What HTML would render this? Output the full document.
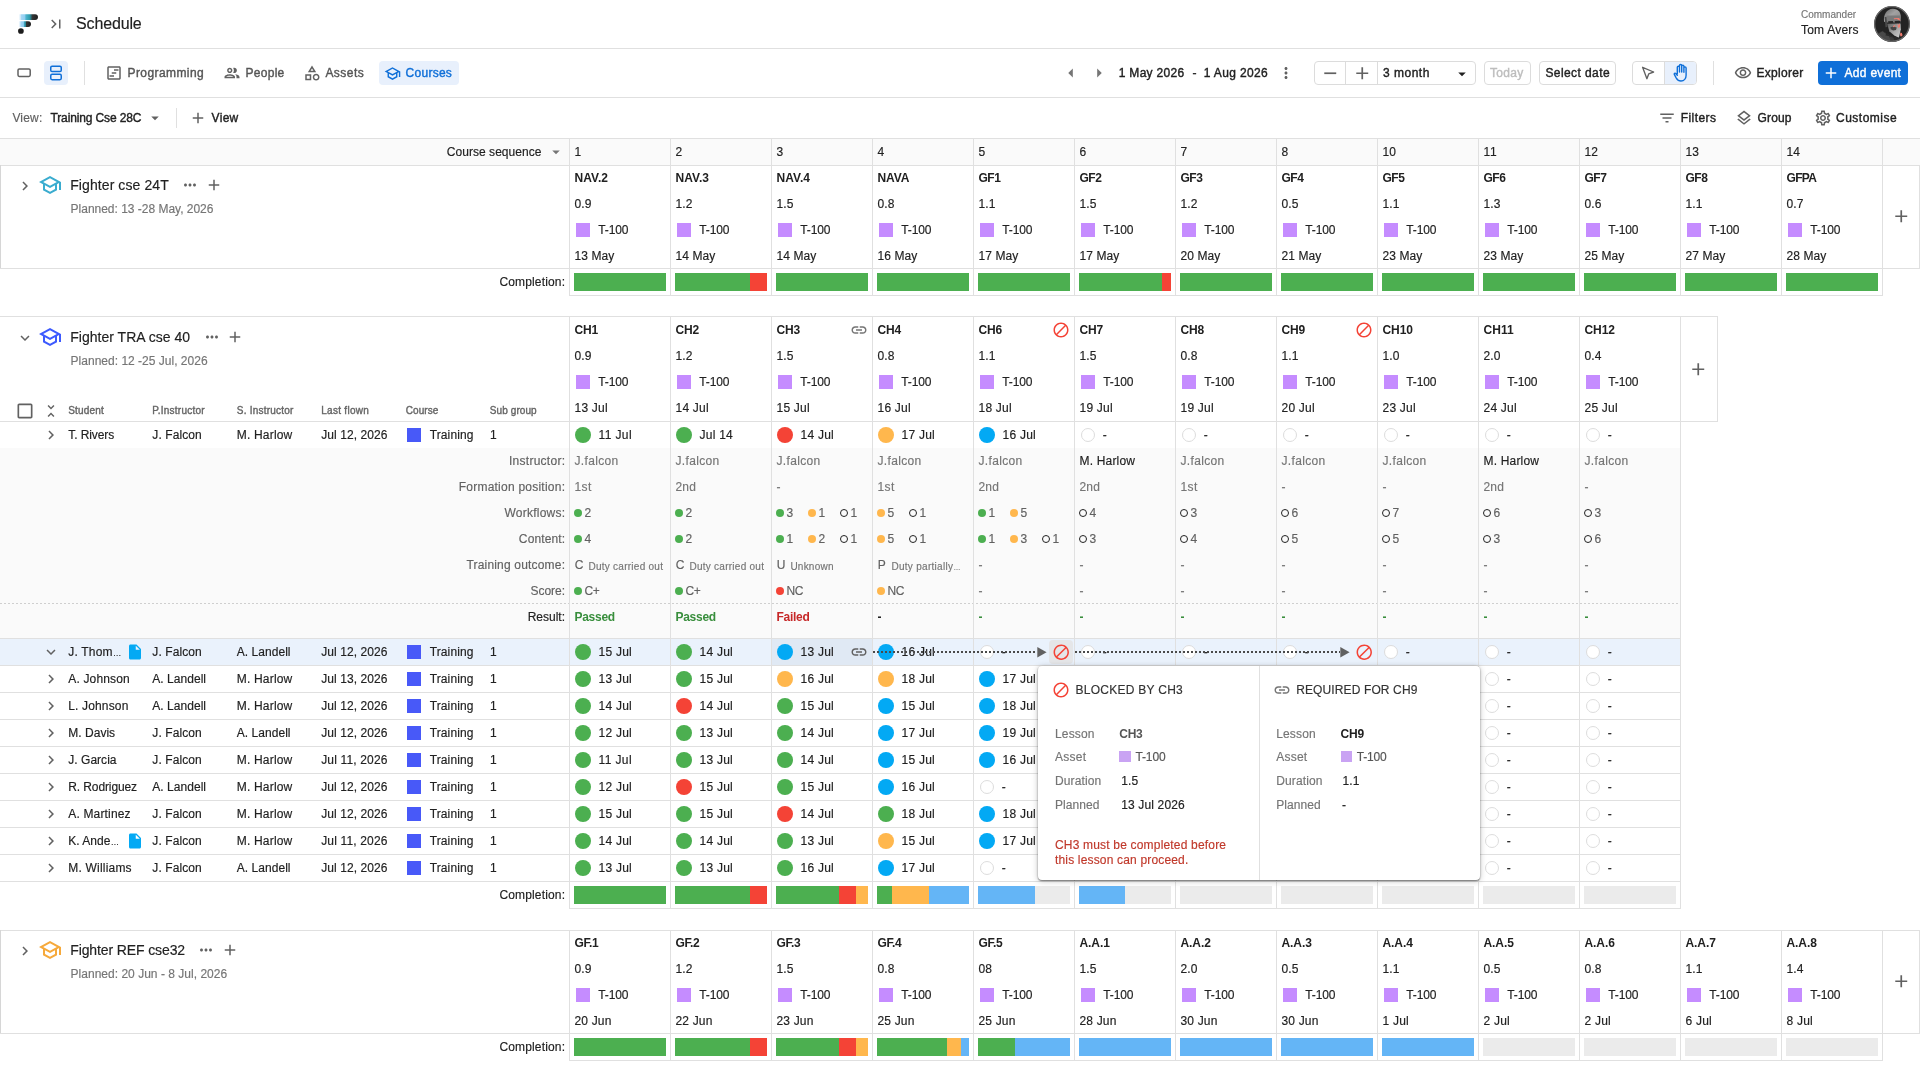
<!DOCTYPE html>
<html lang="en"><head><meta charset="utf-8"><title>Schedule</title>
<style>
html,body{margin:0;padding:0;}
body{width:1920px;height:1080px;overflow:hidden;background:#fff;position:relative;
font-family:"Liberation Sans",sans-serif;-webkit-font-smoothing:antialiased;}
#root{position:absolute;left:0;top:0;width:1920px;height:1080px;will-change:transform;}
.t{position:absolute;white-space:nowrap;margin:0;}
.b{position:absolute;}
.i{position:absolute;display:block;overflow:visible;}
</style></head>
<body>
<div id="root">
<div class="b " style="left:0px;top:48px;width:1920px;height:1px;background:#e0e0e0;"></div>
<svg class="i" style="left:17px;top:13px;" width="23" height="22" viewBox="17 13 23 22"><defs><linearGradient id="lg1" x1="0" x2="1" y1="0" y2="0"><stop offset="0" stop-color="#d6ecfb" stop-opacity="0"/><stop offset="0.100" stop-color="#c2e2f8" stop-opacity="0.800"/><stop offset="0.150" stop-color="#a3d6f4"/><stop offset="0.330" stop-color="#8fcdf0"/><stop offset="0.370" stop-color="#4fb6d0"/><stop offset="0.580" stop-color="#2d9aa9"/><stop offset="0.660" stop-color="#2c5a62"/><stop offset="0.720" stop-color="#333"/><stop offset="1" stop-color="#1e1e1e"/></linearGradient><linearGradient id="lg2" x1="0" x2="1" y1="0" y2="0"><stop offset="0" stop-color="#d6ecfb" stop-opacity="0"/><stop offset="0.140" stop-color="#c2e2f8" stop-opacity="0.800"/><stop offset="0.200" stop-color="#a3d6f4"/><stop offset="0.400" stop-color="#8fcdf0"/><stop offset="0.440" stop-color="#45aec8"/><stop offset="0.560" stop-color="#2b8d9c"/><stop offset="0.620" stop-color="#333"/><stop offset="1" stop-color="#1e1e1e"/></linearGradient></defs><path d="M18.600 14.200H35.100a2.900 2.900 0 0 1 0 5.800H18.600z" fill="url(#lg1)"/><path d="M18.400 21.200H28.100a2.900 2.900 0 0 1 0 5.800H18.400z" fill="url(#lg2)"/><circle cx="20.900" cy="31" r="2.850" fill="#1c1c1c"/></svg>
<svg class="i" style="left:46.6px;top:15.1px;" width="18" height="18" viewBox="0 0 24 24"><path fill="#616161" d="M5.59 7.41L10.18 12l-4.59 4.59L7 18l6-6-6-6zM16 6h2v12h-2z"/></svg>
<div class="t " style="left:76px;top:12px;font-size:16px;line-height:24px;color:#212121;letter-spacing:-0.146px;-webkit-text-stroke:0.160px;">Schedule</div>
<div class="t " style="left:1801px;top:7.4px;font-size:10px;line-height:16px;color:#757575;letter-spacing:0.003px;-webkit-text-stroke:0.160px;">Commander</div>
<div class="t " style="left:1801px;top:20px;font-size:12px;line-height:20px;color:#212121;letter-spacing:0.213px;-webkit-text-stroke:0.160px;">Tom Avers</div>
<svg class="i" style="left:1874px;top:6px;" width="36" height="36" viewBox="0 0 36 36"><defs><clipPath id="av"><circle cx="18" cy="18" r="17.800"/></clipPath><filter id="bl" x="-10%" y="-10%" width="120%" height="120%"><feGaussianBlur stdDeviation="0.550"/></filter><filter id="bl2" x="-10%" y="-10%" width="120%" height="120%"><feGaussianBlur stdDeviation="0.300"/></filter><linearGradient id="hr" x1="0" x2="1" y1="0" y2="1"><stop offset="0" stop-color="#666"/><stop offset="0.45" stop-color="#a2a2a2"/><stop offset="1" stop-color="#858585"/></linearGradient><linearGradient id="bd" x1="0" x2="1" y1="0" y2="1"><stop offset="0" stop-color="#5e5e5e"/><stop offset="0.55" stop-color="#a8a8a8"/><stop offset="1" stop-color="#cfcfcf"/></linearGradient></defs><g clip-path="url(#av)"><rect width="36" height="36" fill="#232323"/><g filter="url(#bl)"><path d="M10 15.500C9.300 8.500 12.500 3.200 18.800 2.800 24.300 2.800 27 6.500 26.800 11.500L26.600 15 10.700 16z" fill="url(#hr)"/><path d="M12.500 9.500h14v7h-14z" fill="#7a7a7a"/><path d="M10.600 11l1.900-.3.900 10.300-1.900.2z" fill="#4a4a4a"/><path d="M14 15.200l4.800-.2.600 2.300-4.600.6z M20.600 15l5.600-.2.100 2.700-4.900.3z" fill="#262626"/><path d="M13.200 17.800l13.400-.3.300 5.800-2.100 8.500-4.500-2.400-5-4.200z" fill="url(#bd)"/><path d="M16.400 21.200l3-.7 3.300 1-.7 2.500-2.900.5-2.300-1.300z" fill="#444"/><path d="M0 28.500l8.500-4 5.500 3.600 6 3 6.500 1 8-4.600V37H0z" fill="#2b2b2b"/><path d="M4.500 27.500l4.200-2.300 3.400 2.800-.8 1.500 3.300.4 2.500 3.200-2.500 3H7.500z" fill="#4a4a4a"/><path d="M15 30.500l4.500 1.200.8 3.200-3.200.6z" fill="#3b3b3b"/></g><path filter="url(#bl2)" d="M19.800 12.200l5.300-.2 1.400 2.700-1.800-.8-1.900-.8-2.800.1z M19 19.900l2.200-1-.5 1.700-1.500.7z M23.200 17.500l1.100 1.800 1.600-2.100.1 3.500-1.300 1.500-.9-1.800z M26.400 26.400l1.400.6.800 2.300-1.700 1.500-.9-1.800z" fill="#f27c6f"/></g><circle cx="18" cy="18" r="17.350" fill="none" stroke="#666" stroke-width="1.300"/></svg>
<div class="b " style="left:0px;top:97px;width:1920px;height:1px;background:#e0e0e0;"></div>
<svg class="i" style="left:16px;top:66px;" width="16" height="14" viewBox="0 0 16 14"><rect x="2" y="3" width="12.200" height="7.400" rx="1.300" fill="none" stroke="#616161" stroke-width="1.500"/></svg>
<div class="b " style="left:44px;top:61px;width:24px;height:24px;background:#e8f0fc;border-radius:4px;"></div>
<svg class="i" style="left:48px;top:63px;" width="16" height="20" viewBox="0 0 16 20"><rect x="2.750" y="3.150" width="10.500" height="5.300" rx="1.300" fill="none" stroke="#0f6fd8" stroke-width="1.500"/><rect x="2.750" y="11.350" width="10.500" height="5.300" rx="1.300" fill="none" stroke="#0f6fd8" stroke-width="1.500"/></svg>
<div class="b " style="left:84px;top:61px;width:1px;height:24px;background:#e0e0e0;"></div>
<svg class="i" style="left:105px;top:64px;" width="18" height="18" viewBox="0 0 24 24"><path fill="#616161" d="M6 15h6v2H6zm6-8h6v2h-6zm-3 4h6v2H9zM19 3H5c-1.1 0-2 .9-2 2v14c0 1.1.9 2 2 2h14c1.1 0 2-.9 2-2V5c0-1.1-.9-2-2-2zm0 16H5V5h14v14z"/></svg>
<div class="t " style="left:127.5px;top:61px;font-size:12px;line-height:24px;color:#555;letter-spacing:0.416px;-webkit-text-stroke:0.380px;">Programming</div>
<svg class="i" style="left:223px;top:64px;" width="18" height="18" viewBox="0 0 24 24"><path fill="#616161" d="M9 13.75c-2.34 0-7 1.17-7 3.5V19h14v-1.75c0-2.33-4.66-3.5-7-3.5zM4.34 17c.84-.58 2.87-1.25 4.66-1.25s3.82.67 4.66 1.25H4.34zM9 12c1.93 0 3.5-1.57 3.5-3.5S10.93 5 9 5 5.5 6.57 5.5 8.5 7.07 12 9 12zm0-5c.83 0 1.5.67 1.5 1.5S9.83 10 9 10s-1.5-.67-1.5-1.5S8.17 7 9 7zm7.04 6.81c1.16.84 1.96 1.96 1.96 3.44V19h4v-1.75c0-2.02-3.5-3.17-5.96-3.44zM15 12c1.93 0 3.5-1.57 3.5-3.5S16.93 5 15 5c-.54 0-1.04.13-1.5.35.63.89 1 1.98 1 3.15s-.37 2.26-1 3.15c.46.22.96.35 1.5.35z"/></svg>
<div class="t " style="left:245.6px;top:61px;font-size:12px;line-height:24px;color:#555;letter-spacing:0.262px;-webkit-text-stroke:0.380px;">People</div>
<svg class="i" style="left:303px;top:63.5px;" width="18" height="18" viewBox="0 0 24 24"><path fill="#616161" d="M12 2l-5.5 9h11L12 2zm0 3.84L13.93 9h-3.87L12 5.84zM17.5 13c-2.49 0-4.5 2.01-4.5 4.5s2.01 4.5 4.5 4.5 4.5-2.01 4.5-4.5-2.01-4.5-4.5-4.5zm0 7c-1.38 0-2.5-1.12-2.5-2.5s1.12-2.5 2.5-2.5 2.5 1.12 2.5 2.5-1.12 2.5-2.5 2.5zM3 21.5h8v-8H3v8zm2-6h4v4H5v-4z"/></svg>
<div class="t " style="left:325.4px;top:61px;font-size:12px;line-height:24px;color:#555;letter-spacing:0.468px;-webkit-text-stroke:0.380px;">Assets</div>
<div class="b " style="left:379px;top:61px;width:80px;height:24px;background:#e8f0fc;border-radius:4px;"></div>
<svg class="i" style="left:384px;top:64.5px;" width="17" height="17" viewBox="0 0 24 24"><path fill="#0f6fd8" d="M12 3L1 9l4 2.18v6L12 21l7-3.82v-6l2-1.09V17h2V9L12 3zm6.82 6L12 12.72 5.18 9 12 5.28 18.82 9zM17 15.99l-5 2.73-5-2.73v-3.72L12 15l5-2.73v3.72z"/></svg>
<div class="t " style="left:405.6px;top:61px;font-size:12px;line-height:24px;color:#0f6fd8;letter-spacing:0.258px;-webkit-text-stroke:0.380px;">Courses</div>
<svg class="i" style="left:1060px;top:62px;" width="22" height="22" viewBox="0 0 24 24"><path fill="#757575" d="M14 7l-5 5 5 5V7z"/></svg>
<svg class="i" style="left:1087.5px;top:62px;" width="22" height="22" viewBox="0 0 24 24"><path fill="#757575" d="M10 17l5-5-5-5v10z"/></svg>
<div class="t " style="left:1118.7px;top:61px;font-size:12px;line-height:24px;color:#212121;letter-spacing:0.313px;-webkit-text-stroke:0.380px;">1 May 2026</div>
<div class="t " style="left:1192.5px;top:61px;font-size:12px;line-height:24px;color:#212121;letter-spacing:-0.053px;-webkit-text-stroke:0.380px;">-</div>
<div class="t " style="left:1203.7px;top:61px;font-size:12px;line-height:24px;color:#212121;letter-spacing:0.374px;-webkit-text-stroke:0.380px;">1 Aug 2026</div>
<svg class="i" style="left:1277px;top:64px;" width="18" height="18" viewBox="0 0 24 24"><path fill="#616161" d="M12 8c1.1 0 2-.9 2-2s-.9-2-2-2-2 .9-2 2 .9 2 2 2zm0 2c-1.1 0-2 .9-2 2s.9 2 2 2 2-.9 2-2-.9-2-2-2zm0 6c-1.1 0-2 .9-2 2s.9 2 2 2 2-.9 2-2-.9-2-2-2z"/></svg>
<div class="b " style="left:1314px;top:61px;width:162px;height:24px;background:#fff;border:1px solid #dcdcdc;border-radius:4px;box-sizing:border-box;"></div>
<div class="b " style="left:1345px;top:61px;width:1px;height:24px;background:#dcdcdc;"></div>
<div class="b " style="left:1377px;top:61px;width:1px;height:24px;background:#dcdcdc;"></div>
<svg class="i" style="left:1319.65px;top:62.75px;" width="20.5" height="20.5" viewBox="0 0 24 24"><path fill="#616161" d="M19 13H5v-2h14v2z"/></svg>
<svg class="i" style="left:1351.75px;top:62.85px;" width="20.5" height="20.5" viewBox="0 0 24 24"><path fill="#616161" d="M19 13h-6v6h-2v-6H5v-2h6V5h2v6h6v2z"/></svg>
<div class="t " style="left:1383px;top:61px;font-size:12px;line-height:24px;color:#212121;letter-spacing:0.502px;-webkit-text-stroke:0.380px;">3 month</div>
<svg class="i" style="left:1453px;top:64.5px;" width="18" height="18" viewBox="0 0 24 24"><path fill="#212121" d="M7 10l5 5 5-5z"/></svg>
<div class="b " style="left:1484px;top:61px;width:47px;height:24px;background:#fff;border:1px solid #dcdcdc;border-radius:4px;box-sizing:border-box;"></div>
<div class="t " style="left:1490px;top:61px;font-size:12px;line-height:24px;color:#bdbdbd;letter-spacing:0.282px;-webkit-text-stroke:0.380px;">Today</div>
<div class="b " style="left:1539px;top:61px;width:77px;height:24px;background:#fff;border:1px solid #dcdcdc;border-radius:4px;box-sizing:border-box;"></div>
<div class="t " style="left:1545.4px;top:61px;font-size:12px;line-height:24px;color:#212121;letter-spacing:0.413px;-webkit-text-stroke:0.380px;">Select date</div>
<div class="b " style="left:1632px;top:61px;width:65px;height:24px;background:#fff;border:1px solid #dcdcdc;border-radius:4px;box-sizing:border-box;overflow:hidden;"></div>
<div class="b " style="left:1665px;top:62px;width:31px;height:22px;background:#e8f0fc;border-radius:0 3px 3px 0;"></div>
<div class="b " style="left:1664px;top:61px;width:1px;height:24px;background:#dcdcdc;"></div>
<svg class="i" style="left:1640px;top:65px;" width="16" height="16" viewBox="0 0 16 16"><path d="M2.600 2.300L13.600 7 8.700 8.900 6.900 13.700z" fill="none" stroke="#616161" stroke-width="1.350" stroke-linejoin="round"/></svg>
<svg class="i" style="left:1672px;top:63px;" width="18" height="20" viewBox="0 0 18 20"><path d="M5.300 10.800V4.300a1.100 1.100 0 0 1 2.200 0V9 M7.500 9V2.600a1.100 1.100 0 0 1 2.200 0V9 M9.700 9V3.200a1.100 1.100 0 0 1 2.200 0V9.200 M11.900 9.200V5a1.100 1.100 0 0 1 2.200 0v7.300c0 3.300-2 5.700-5.100 5.700-2.300 0-3.600-1-4.700-2.900L2.300 11.400c-.5-.9.700-1.700 1.500-.9l1.500 1.700" fill="none" stroke="#0f6fd8" stroke-width="1.400" stroke-linecap="round" stroke-linejoin="round"/></svg>
<div class="b " style="left:1713px;top:61px;width:1px;height:24px;background:#e0e0e0;"></div>
<svg class="i" style="left:1734px;top:64.1px;" width="18" height="18" viewBox="0 0 24 24"><path fill="#616161" d="M12 6c3.79 0 7.17 2.13 8.82 5.5C19.17 14.87 15.79 17 12 17s-7.17-2.13-8.82-5.5C4.83 8.13 8.21 6 12 6m0-2C7 4 2.73 7.11 1 11.5 2.73 15.89 7 19 12 19s9.27-3.11 11-7.5C21.27 7.11 17 4 12 4zm0 5c1.38 0 2.5 1.12 2.5 2.5S13.38 14 12 14s-2.5-1.12-2.5-2.5S10.62 9 12 9m0-2c-2.48 0-4.5 2.02-4.5 4.5S9.52 16 12 16s4.5-2.02 4.5-4.5S14.48 7 12 7z"/></svg>
<div class="t " style="left:1756.5px;top:61px;font-size:12px;line-height:24px;color:#212121;letter-spacing:0.296px;-webkit-text-stroke:0.380px;">Explorer</div>
<div class="b " style="left:1818px;top:61px;width:90px;height:24px;background:#0f6fd8;border-radius:4px;"></div>
<svg class="i" style="left:1821.5px;top:64px;" width="18" height="18" viewBox="0 0 24 24"><path fill="#fff" d="M19 13h-6v6h-2v-6H5v-2h6V5h2v6h6v2z"/></svg>
<div class="t " style="left:1844.5px;top:61px;font-size:12px;line-height:24px;color:#fff;letter-spacing:0.301px;-webkit-text-stroke:0.380px;">Add event</div>
<div class="b " style="left:0px;top:138px;width:1920px;height:1px;background:#e0e0e0;"></div>
<div class="t " style="left:12.4px;top:106px;font-size:12px;line-height:24px;color:#616161;letter-spacing:0.194px;-webkit-text-stroke:0.160px;">View:</div>
<div class="t " style="left:50.5px;top:106px;font-size:12px;line-height:24px;color:#212121;letter-spacing:-0.129px;-webkit-text-stroke:0.380px;">Training Cse 28C</div>
<svg class="i" style="left:145.6px;top:109.3px;" width="18" height="18" viewBox="0 0 24 24"><path fill="#616161" d="M7 10l5 5 5-5z"/></svg>
<div class="b " style="left:176px;top:108px;width:1px;height:20px;background:#e0e0e0;"></div>
<svg class="i" style="left:188.8px;top:109px;" width="18" height="18" viewBox="0 0 24 24"><path fill="#616161" d="M19 13h-6v6h-2v-6H5v-2h6V5h2v6h6v2z"/></svg>
<div class="t " style="left:211.6px;top:106px;font-size:12px;line-height:24px;color:#212121;letter-spacing:0.301px;-webkit-text-stroke:0.380px;">View</div>
<svg class="i" style="left:1658px;top:109px;" width="18" height="18" viewBox="0 0 24 24"><path fill="#616161" d="M10 18h4v-2h-4v2zM3 6v2h18V6H3zm3 7h12v-2H6v2z"/></svg>
<div class="t " style="left:1680.7px;top:106px;font-size:12px;line-height:24px;color:#212121;letter-spacing:0.432px;-webkit-text-stroke:0.380px;">Filters</div>
<svg class="i" style="left:1735px;top:109px;" width="18" height="18" viewBox="0 0 24 24"><path fill="#616161" d="M11.99 18.54l-7.37-5.73L3 14.07l9 7 9-7-1.63-1.27-7.38 5.74zM12 16l7.36-5.73L21 9l-9-7-9 7 1.63 1.27L12 16zm0-11.47L17.74 9 12 13.47 6.26 9 12 4.53z"/></svg>
<div class="t " style="left:1757.6px;top:106px;font-size:12px;line-height:24px;color:#212121;letter-spacing:0.117px;-webkit-text-stroke:0.380px;">Group</div>
<svg class="i" style="left:1814px;top:109px;" width="18" height="18" viewBox="0 0 24 24"><path fill="#616161" d="M19.43 12.98c.04-.32.07-.64.07-.98 0-.34-.03-.66-.07-.98l2.11-1.65c.19-.15.24-.42.12-.64l-2-3.46c-.09-.16-.26-.25-.44-.25-.06 0-.12.01-.17.03l-2.49 1c-.52-.4-1.08-.73-1.69-.98l-.38-2.65C14.46 2.18 14.25 2 14 2h-4c-.25 0-.46.18-.49.42l-.38 2.65c-.61.25-1.17.59-1.69.98l-2.49-1c-.06-.02-.12-.03-.18-.03-.17 0-.34.09-.43.25l-2 3.46c-.13.22-.07.49.12.64l2.11 1.65c-.04.32-.07.65-.07.98 0 .33.03.66.07.98l-2.11 1.65c-.19.15-.24.42-.12.64l2 3.46c.09.16.26.25.44.25.06 0 .12-.01.17-.03l2.49-1c.52.4 1.08.73 1.69.98l.38 2.65c.03.24.24.42.49.42h4c.25 0 .46-.18.49-.42l.38-2.65c.61-.25 1.17-.59 1.69-.98l2.49 1c.06.02.12.03.18.03.17 0 .34-.09.43-.25l2-3.46c.12-.22.07-.49-.12-.64l-2.11-1.65zm-1.98-1.71c.04.31.05.52.05.73 0 .21-.02.43-.05.73l-.14 1.13.89.7 1.08.84-.7 1.21-1.27-.51-1.04-.42-.9.68c-.43.32-.84.56-1.25.73l-1.06.43-.16 1.13-.2 1.35h-1.4l-.19-1.35-.16-1.13-1.06-.43c-.43-.18-.83-.41-1.23-.71l-.91-.7-1.06.43-1.27.51-.7-1.21 1.08-.84.89-.7-.14-1.13c-.03-.31-.05-.54-.05-.74s.02-.43.05-.73l.14-1.13-.89-.7-1.08-.84.7-1.21 1.27.51 1.04.42.9-.68c.43-.32.84-.56 1.25-.73l1.06-.43.16-1.13.2-1.35h1.39l.19 1.35.16 1.13 1.06.43c.43.18.83.41 1.23.71l.91.7 1.06-.43 1.27-.51.7 1.21-1.07.85-.89.7.14 1.13zM12 8c-2.21 0-4 1.79-4 4s1.79 4 4 4 4-1.79 4-4-1.79-4-4-4zm0 6c-1.1 0-2-.9-2-2s.9-2 2-2 2 .9 2 2-.9 2-2 2z"/></svg>
<div class="t " style="left:1836px;top:106px;font-size:12px;line-height:24px;color:#212121;letter-spacing:0.492px;-webkit-text-stroke:0.380px;">Customise</div>
<div class="b " style="left:0px;top:139px;width:1920px;height:26px;background:#fafafa;"></div>
<div class="b " style="left:0px;top:165px;width:1920px;height:1px;background:#e0e0e0;"></div>
<div class="t " style="left:-58.5px;width:600px;text-align:right;top:139px;font-size:12px;line-height:26px;color:#212121;letter-spacing:0.046px;-webkit-text-stroke:0.160px;margin-left:0.046px;">Course sequence</div>
<svg class="i" style="left:546.8px;top:143.2px;" width="18" height="18" viewBox="0 0 24 24"><path fill="#757575" d="M7 10l5 5 5-5z"/></svg>
<div class="b " style="left:569px;top:139px;width:1px;height:26px;background:#e0e0e0;"></div>
<div class="t " style="left:574.5px;top:139px;font-size:12px;line-height:26px;color:#212121;letter-spacing:0.190px;-webkit-text-stroke:0.160px;">1</div>
<div class="b " style="left:670px;top:139px;width:1px;height:26px;background:#e0e0e0;"></div>
<div class="t " style="left:675.5px;top:139px;font-size:12px;line-height:26px;color:#212121;letter-spacing:0.190px;-webkit-text-stroke:0.160px;">2</div>
<div class="b " style="left:771px;top:139px;width:1px;height:26px;background:#e0e0e0;"></div>
<div class="t " style="left:776.5px;top:139px;font-size:12px;line-height:26px;color:#212121;letter-spacing:0.190px;-webkit-text-stroke:0.160px;">3</div>
<div class="b " style="left:872px;top:139px;width:1px;height:26px;background:#e0e0e0;"></div>
<div class="t " style="left:877.5px;top:139px;font-size:12px;line-height:26px;color:#212121;letter-spacing:0.190px;-webkit-text-stroke:0.160px;">4</div>
<div class="b " style="left:973px;top:139px;width:1px;height:26px;background:#e0e0e0;"></div>
<div class="t " style="left:978.5px;top:139px;font-size:12px;line-height:26px;color:#212121;letter-spacing:0.190px;-webkit-text-stroke:0.160px;">5</div>
<div class="b " style="left:1074px;top:139px;width:1px;height:26px;background:#e0e0e0;"></div>
<div class="t " style="left:1079.5px;top:139px;font-size:12px;line-height:26px;color:#212121;letter-spacing:0.190px;-webkit-text-stroke:0.160px;">6</div>
<div class="b " style="left:1175px;top:139px;width:1px;height:26px;background:#e0e0e0;"></div>
<div class="t " style="left:1180.5px;top:139px;font-size:12px;line-height:26px;color:#212121;letter-spacing:0.190px;-webkit-text-stroke:0.160px;">7</div>
<div class="b " style="left:1276px;top:139px;width:1px;height:26px;background:#e0e0e0;"></div>
<div class="t " style="left:1281.5px;top:139px;font-size:12px;line-height:26px;color:#212121;letter-spacing:0.190px;-webkit-text-stroke:0.160px;">8</div>
<div class="b " style="left:1377px;top:139px;width:1px;height:26px;background:#e0e0e0;"></div>
<div class="t " style="left:1382.5px;top:139px;font-size:12px;line-height:26px;color:#212121;letter-spacing:0.190px;-webkit-text-stroke:0.160px;">10</div>
<div class="b " style="left:1478px;top:139px;width:1px;height:26px;background:#e0e0e0;"></div>
<div class="t " style="left:1483.5px;top:139px;font-size:12px;line-height:26px;color:#212121;letter-spacing:0.636px;-webkit-text-stroke:0.160px;">11</div>
<div class="b " style="left:1579px;top:139px;width:1px;height:26px;background:#e0e0e0;"></div>
<div class="t " style="left:1584.5px;top:139px;font-size:12px;line-height:26px;color:#212121;letter-spacing:0.190px;-webkit-text-stroke:0.160px;">12</div>
<div class="b " style="left:1680px;top:139px;width:1px;height:26px;background:#e0e0e0;"></div>
<div class="t " style="left:1685.5px;top:139px;font-size:12px;line-height:26px;color:#212121;letter-spacing:0.190px;-webkit-text-stroke:0.160px;">13</div>
<div class="b " style="left:1781px;top:139px;width:1px;height:26px;background:#e0e0e0;"></div>
<div class="t " style="left:1786.5px;top:139px;font-size:12px;line-height:26px;color:#212121;letter-spacing:0.190px;-webkit-text-stroke:0.160px;">14</div>
<div class="b " style="left:1882px;top:139px;width:1px;height:26px;background:#e0e0e0;"></div>
<div class="b " style="left:0px;top:165px;width:1px;height:104px;background:#d6d6d6;"></div>
<div class="b " style="left:569px;top:165px;width:1px;height:104px;background:#e0e0e0;"></div>
<div class="b " style="left:670px;top:165px;width:1px;height:104px;background:#e0e0e0;"></div>
<div class="b " style="left:771px;top:165px;width:1px;height:104px;background:#e0e0e0;"></div>
<div class="b " style="left:872px;top:165px;width:1px;height:104px;background:#e0e0e0;"></div>
<div class="b " style="left:973px;top:165px;width:1px;height:104px;background:#e0e0e0;"></div>
<div class="b " style="left:1074px;top:165px;width:1px;height:104px;background:#e0e0e0;"></div>
<div class="b " style="left:1175px;top:165px;width:1px;height:104px;background:#e0e0e0;"></div>
<div class="b " style="left:1276px;top:165px;width:1px;height:104px;background:#e0e0e0;"></div>
<div class="b " style="left:1377px;top:165px;width:1px;height:104px;background:#e0e0e0;"></div>
<div class="b " style="left:1478px;top:165px;width:1px;height:104px;background:#e0e0e0;"></div>
<div class="b " style="left:1579px;top:165px;width:1px;height:104px;background:#e0e0e0;"></div>
<div class="b " style="left:1680px;top:165px;width:1px;height:104px;background:#e0e0e0;"></div>
<div class="b " style="left:1781px;top:165px;width:1px;height:104px;background:#e0e0e0;"></div>
<div class="b " style="left:1882px;top:165px;width:1px;height:104px;background:#e0e0e0;"></div>
<div class="b " style="left:0px;top:268px;width:1920px;height:1px;background:#e0e0e0;"></div>
<div class="b " style="left:1919px;top:165px;width:1px;height:104px;background:#e0e0e0;"></div>
<div class="t " style="left:574.5px;top:165px;font-size:12px;line-height:26px;color:#212121;letter-spacing:0.015px;font-weight:bold;">NAV.2</div>
<div class="t " style="left:574.5px;top:191px;font-size:12px;line-height:26px;color:#212121;letter-spacing:0.110px;-webkit-text-stroke:0.160px;">0.9</div>
<div class="b " style="left:576px;top:223px;width:14px;height:14px;background:#c58cff;"></div>
<div class="t " style="left:598.3px;top:217px;font-size:12px;line-height:26px;color:#212121;letter-spacing:-0.147px;-webkit-text-stroke:0.160px;">T-100</div>
<div class="t " style="left:574.5px;top:243px;font-size:12px;line-height:26px;color:#212121;letter-spacing:0.071px;-webkit-text-stroke:0.160px;">13 May</div>
<div class="t " style="left:675.5px;top:165px;font-size:12px;line-height:26px;color:#212121;letter-spacing:0.015px;font-weight:bold;">NAV.3</div>
<div class="t " style="left:675.5px;top:191px;font-size:12px;line-height:26px;color:#212121;letter-spacing:0.110px;-webkit-text-stroke:0.160px;">1.2</div>
<div class="b " style="left:677px;top:223px;width:14px;height:14px;background:#c58cff;"></div>
<div class="t " style="left:699.3px;top:217px;font-size:12px;line-height:26px;color:#212121;letter-spacing:-0.147px;-webkit-text-stroke:0.160px;">T-100</div>
<div class="t " style="left:675.5px;top:243px;font-size:12px;line-height:26px;color:#212121;letter-spacing:0.071px;-webkit-text-stroke:0.160px;">14 May</div>
<div class="t " style="left:776.5px;top:165px;font-size:12px;line-height:26px;color:#212121;letter-spacing:0.015px;font-weight:bold;">NAV.4</div>
<div class="t " style="left:776.5px;top:191px;font-size:12px;line-height:26px;color:#212121;letter-spacing:0.110px;-webkit-text-stroke:0.160px;">1.5</div>
<div class="b " style="left:778px;top:223px;width:14px;height:14px;background:#c58cff;"></div>
<div class="t " style="left:800.3px;top:217px;font-size:12px;line-height:26px;color:#212121;letter-spacing:-0.147px;-webkit-text-stroke:0.160px;">T-100</div>
<div class="t " style="left:776.5px;top:243px;font-size:12px;line-height:26px;color:#212121;letter-spacing:0.071px;-webkit-text-stroke:0.160px;">14 May</div>
<div class="t " style="left:877.5px;top:165px;font-size:12px;line-height:26px;color:#212121;letter-spacing:-0.080px;font-weight:bold;">NAVA</div>
<div class="t " style="left:877.5px;top:191px;font-size:12px;line-height:26px;color:#212121;letter-spacing:0.110px;-webkit-text-stroke:0.160px;">0.8</div>
<div class="b " style="left:879px;top:223px;width:14px;height:14px;background:#c58cff;"></div>
<div class="t " style="left:901.3px;top:217px;font-size:12px;line-height:26px;color:#212121;letter-spacing:-0.147px;-webkit-text-stroke:0.160px;">T-100</div>
<div class="t " style="left:877.5px;top:243px;font-size:12px;line-height:26px;color:#212121;letter-spacing:0.071px;-webkit-text-stroke:0.160px;">16 May</div>
<div class="t " style="left:978.5px;top:165px;font-size:12px;line-height:26px;color:#212121;letter-spacing:-0.516px;font-weight:bold;">GF1</div>
<div class="t " style="left:978.5px;top:191px;font-size:12px;line-height:26px;color:#212121;letter-spacing:0.110px;-webkit-text-stroke:0.160px;">1.1</div>
<div class="b " style="left:980px;top:223px;width:14px;height:14px;background:#c58cff;"></div>
<div class="t " style="left:1002.3px;top:217px;font-size:12px;line-height:26px;color:#212121;letter-spacing:-0.147px;-webkit-text-stroke:0.160px;">T-100</div>
<div class="t " style="left:978.5px;top:243px;font-size:12px;line-height:26px;color:#212121;letter-spacing:0.071px;-webkit-text-stroke:0.160px;">17 May</div>
<div class="t " style="left:1079.5px;top:165px;font-size:12px;line-height:26px;color:#212121;letter-spacing:-0.516px;font-weight:bold;">GF2</div>
<div class="t " style="left:1079.5px;top:191px;font-size:12px;line-height:26px;color:#212121;letter-spacing:0.110px;-webkit-text-stroke:0.160px;">1.5</div>
<div class="b " style="left:1081px;top:223px;width:14px;height:14px;background:#c58cff;"></div>
<div class="t " style="left:1103.3px;top:217px;font-size:12px;line-height:26px;color:#212121;letter-spacing:-0.147px;-webkit-text-stroke:0.160px;">T-100</div>
<div class="t " style="left:1079.5px;top:243px;font-size:12px;line-height:26px;color:#212121;letter-spacing:0.071px;-webkit-text-stroke:0.160px;">17 May</div>
<div class="t " style="left:1180.5px;top:165px;font-size:12px;line-height:26px;color:#212121;letter-spacing:-0.516px;font-weight:bold;">GF3</div>
<div class="t " style="left:1180.5px;top:191px;font-size:12px;line-height:26px;color:#212121;letter-spacing:0.110px;-webkit-text-stroke:0.160px;">1.2</div>
<div class="b " style="left:1182px;top:223px;width:14px;height:14px;background:#c58cff;"></div>
<div class="t " style="left:1204.3px;top:217px;font-size:12px;line-height:26px;color:#212121;letter-spacing:-0.147px;-webkit-text-stroke:0.160px;">T-100</div>
<div class="t " style="left:1180.5px;top:243px;font-size:12px;line-height:26px;color:#212121;letter-spacing:0.071px;-webkit-text-stroke:0.160px;">20 May</div>
<div class="t " style="left:1281.5px;top:165px;font-size:12px;line-height:26px;color:#212121;letter-spacing:-0.516px;font-weight:bold;">GF4</div>
<div class="t " style="left:1281.5px;top:191px;font-size:12px;line-height:26px;color:#212121;letter-spacing:0.110px;-webkit-text-stroke:0.160px;">0.5</div>
<div class="b " style="left:1283px;top:223px;width:14px;height:14px;background:#c58cff;"></div>
<div class="t " style="left:1305.3px;top:217px;font-size:12px;line-height:26px;color:#212121;letter-spacing:-0.147px;-webkit-text-stroke:0.160px;">T-100</div>
<div class="t " style="left:1281.5px;top:243px;font-size:12px;line-height:26px;color:#212121;letter-spacing:0.071px;-webkit-text-stroke:0.160px;">21 May</div>
<div class="t " style="left:1382.5px;top:165px;font-size:12px;line-height:26px;color:#212121;letter-spacing:-0.516px;font-weight:bold;">GF5</div>
<div class="t " style="left:1382.5px;top:191px;font-size:12px;line-height:26px;color:#212121;letter-spacing:0.110px;-webkit-text-stroke:0.160px;">1.1</div>
<div class="b " style="left:1384px;top:223px;width:14px;height:14px;background:#c58cff;"></div>
<div class="t " style="left:1406.3px;top:217px;font-size:12px;line-height:26px;color:#212121;letter-spacing:-0.147px;-webkit-text-stroke:0.160px;">T-100</div>
<div class="t " style="left:1382.5px;top:243px;font-size:12px;line-height:26px;color:#212121;letter-spacing:0.071px;-webkit-text-stroke:0.160px;">23 May</div>
<div class="t " style="left:1483.5px;top:165px;font-size:12px;line-height:26px;color:#212121;letter-spacing:-0.516px;font-weight:bold;">GF6</div>
<div class="t " style="left:1483.5px;top:191px;font-size:12px;line-height:26px;color:#212121;letter-spacing:0.110px;-webkit-text-stroke:0.160px;">1.3</div>
<div class="b " style="left:1485px;top:223px;width:14px;height:14px;background:#c58cff;"></div>
<div class="t " style="left:1507.3px;top:217px;font-size:12px;line-height:26px;color:#212121;letter-spacing:-0.147px;-webkit-text-stroke:0.160px;">T-100</div>
<div class="t " style="left:1483.5px;top:243px;font-size:12px;line-height:26px;color:#212121;letter-spacing:0.071px;-webkit-text-stroke:0.160px;">23 May</div>
<div class="t " style="left:1584.5px;top:165px;font-size:12px;line-height:26px;color:#212121;letter-spacing:-0.516px;font-weight:bold;">GF7</div>
<div class="t " style="left:1584.5px;top:191px;font-size:12px;line-height:26px;color:#212121;letter-spacing:0.110px;-webkit-text-stroke:0.160px;">0.6</div>
<div class="b " style="left:1586px;top:223px;width:14px;height:14px;background:#c58cff;"></div>
<div class="t " style="left:1608.3px;top:217px;font-size:12px;line-height:26px;color:#212121;letter-spacing:-0.147px;-webkit-text-stroke:0.160px;">T-100</div>
<div class="t " style="left:1584.5px;top:243px;font-size:12px;line-height:26px;color:#212121;letter-spacing:0.071px;-webkit-text-stroke:0.160px;">25 May</div>
<div class="t " style="left:1685.5px;top:165px;font-size:12px;line-height:26px;color:#212121;letter-spacing:-0.516px;font-weight:bold;">GF8</div>
<div class="t " style="left:1685.5px;top:191px;font-size:12px;line-height:26px;color:#212121;letter-spacing:0.110px;-webkit-text-stroke:0.160px;">1.1</div>
<div class="b " style="left:1687px;top:223px;width:14px;height:14px;background:#c58cff;"></div>
<div class="t " style="left:1709.3px;top:217px;font-size:12px;line-height:26px;color:#212121;letter-spacing:-0.147px;-webkit-text-stroke:0.160px;">T-100</div>
<div class="t " style="left:1685.5px;top:243px;font-size:12px;line-height:26px;color:#212121;letter-spacing:0.071px;-webkit-text-stroke:0.160px;">27 May</div>
<div class="t " style="left:1786.5px;top:165px;font-size:12px;line-height:26px;color:#212121;letter-spacing:-0.676px;font-weight:bold;">GFPA</div>
<div class="t " style="left:1786.5px;top:191px;font-size:12px;line-height:26px;color:#212121;letter-spacing:0.110px;-webkit-text-stroke:0.160px;">0.7</div>
<div class="b " style="left:1788px;top:223px;width:14px;height:14px;background:#c58cff;"></div>
<div class="t " style="left:1810.3px;top:217px;font-size:12px;line-height:26px;color:#212121;letter-spacing:-0.147px;-webkit-text-stroke:0.160px;">T-100</div>
<div class="t " style="left:1786.5px;top:243px;font-size:12px;line-height:26px;color:#212121;letter-spacing:0.071px;-webkit-text-stroke:0.160px;">28 May</div>
<svg class="i" style="left:1890.55px;top:206.45px;" width="20.5" height="20.5" viewBox="0 0 24 24"><path fill="#616161" d="M19 13h-6v6h-2v-6H5v-2h6V5h2v6h6v2z"/></svg>
<svg class="i" style="left:16px;top:177.2px;" width="18" height="18" viewBox="0 0 24 24"><path fill="#616161" d="M10 6L8.59 7.41 13.17 12l-4.58 4.59L10 18l6-6z"/></svg>
<svg class="i" style="left:38.4px;top:173px;" width="24" height="24" viewBox="0 0 24 24"><path fill="#3aaccf" d="M12 3L1 9l4 2.18v6L12 21l7-3.82v-6l2-1.09V17h2V9L12 3zm6.82 6L12 12.72 5.18 9 12 5.28 18.82 9zM17 15.99l-5 2.73-5-2.73v-3.72L12 15l5-2.73v3.72z"/></svg>
<div class="t " style="left:70.2px;top:172.4px;font-size:14px;line-height:26px;color:#212121;letter-spacing:0.088px;-webkit-text-stroke:0.160px;">Fighter cse 24T</div>
<svg class="i" style="left:181.18px;top:176px;" width="18" height="18" viewBox="0 0 24 24"><path fill="#616161" d="M6 10c-1.1 0-2 .9-2 2s.9 2 2 2 2-.9 2-2-.9-2-2-2zm12 0c-1.1 0-2 .9-2 2s.9 2 2 2 2-.9 2-2-.9-2-2-2zm-6 0c-1.1 0-2 .9-2 2s.9 2 2 2 2-.9 2-2-.9-2-2-2z"/></svg>
<svg class="i" style="left:204.88px;top:176px;" width="18" height="18" viewBox="0 0 24 24"><path fill="#616161" d="M19 13h-6v6h-2v-6H5v-2h6V5h2v6h6v2z"/></svg>
<div class="t " style="left:70.6px;top:196.4px;font-size:12px;line-height:26px;color:#757575;letter-spacing:-0.016px;-webkit-text-stroke:0.160px;">Planned: 13 -28 May, 2026</div>
<div class="t " style="left:-35px;width:600px;text-align:right;top:269px;font-size:12px;line-height:26px;color:#212121;letter-spacing:0.155px;-webkit-text-stroke:0.160px;margin-left:0.155px;">Completion:</div>
<div class="b " style="left:569px;top:269px;width:1px;height:26px;background:#e0e0e0;"></div>
<div class="b " style="left:574px;top:273px;width:92px;height:18px;background:#4caf50;"></div>
<div class="b " style="left:670px;top:269px;width:1px;height:26px;background:#e0e0e0;"></div>
<div class="b " style="left:675px;top:273px;width:75px;height:18px;background:#4caf50;"></div>
<div class="b " style="left:750px;top:273px;width:17px;height:18px;background:#f44336;"></div>
<div class="b " style="left:771px;top:269px;width:1px;height:26px;background:#e0e0e0;"></div>
<div class="b " style="left:776px;top:273px;width:92px;height:18px;background:#4caf50;"></div>
<div class="b " style="left:872px;top:269px;width:1px;height:26px;background:#e0e0e0;"></div>
<div class="b " style="left:877px;top:273px;width:92px;height:18px;background:#4caf50;"></div>
<div class="b " style="left:973px;top:269px;width:1px;height:26px;background:#e0e0e0;"></div>
<div class="b " style="left:978px;top:273px;width:92px;height:18px;background:#4caf50;"></div>
<div class="b " style="left:1074px;top:269px;width:1px;height:26px;background:#e0e0e0;"></div>
<div class="b " style="left:1079px;top:273px;width:83px;height:18px;background:#4caf50;"></div>
<div class="b " style="left:1162px;top:273px;width:9px;height:18px;background:#f44336;"></div>
<div class="b " style="left:1175px;top:269px;width:1px;height:26px;background:#e0e0e0;"></div>
<div class="b " style="left:1180px;top:273px;width:92px;height:18px;background:#4caf50;"></div>
<div class="b " style="left:1276px;top:269px;width:1px;height:26px;background:#e0e0e0;"></div>
<div class="b " style="left:1281px;top:273px;width:92px;height:18px;background:#4caf50;"></div>
<div class="b " style="left:1377px;top:269px;width:1px;height:26px;background:#e0e0e0;"></div>
<div class="b " style="left:1382px;top:273px;width:92px;height:18px;background:#4caf50;"></div>
<div class="b " style="left:1478px;top:269px;width:1px;height:26px;background:#e0e0e0;"></div>
<div class="b " style="left:1483px;top:273px;width:92px;height:18px;background:#4caf50;"></div>
<div class="b " style="left:1579px;top:269px;width:1px;height:26px;background:#e0e0e0;"></div>
<div class="b " style="left:1584px;top:273px;width:92px;height:18px;background:#4caf50;"></div>
<div class="b " style="left:1680px;top:269px;width:1px;height:26px;background:#e0e0e0;"></div>
<div class="b " style="left:1685px;top:273px;width:92px;height:18px;background:#4caf50;"></div>
<div class="b " style="left:1781px;top:269px;width:1px;height:26px;background:#e0e0e0;"></div>
<div class="b " style="left:1786px;top:273px;width:92px;height:18px;background:#4caf50;"></div>
<div class="b " style="left:1882px;top:269px;width:1px;height:27px;background:#e0e0e0;"></div>
<div class="b " style="left:569px;top:295px;width:1314px;height:1px;background:#e0e0e0;"></div>
<div class="b " style="left:0px;top:448px;width:1680px;height:190px;background:#fafafa;"></div>
<div class="b " style="left:0px;top:639px;width:1680px;height:26px;background:#eaf2fc;"></div>
<div class="b " style="left:772px;top:639px;width:100px;height:26px;background:rgba(30,40,60,0.045);"></div>
<div class="b " style="left:0px;top:316px;width:1718px;height:1px;background:#e0e0e0;"></div>
<div class="b " style="left:0px;top:421px;width:1718px;height:1px;background:#e0e0e0;"></div>
<div class="b " style="left:1717px;top:316px;width:1px;height:106px;background:#e0e0e0;"></div>
<div class="b " style="left:569px;top:316px;width:1px;height:592px;background:#e0e0e0;"></div>
<div class="b " style="left:670px;top:316px;width:1px;height:592px;background:#e0e0e0;"></div>
<div class="b " style="left:771px;top:316px;width:1px;height:592px;background:#e0e0e0;"></div>
<div class="b " style="left:872px;top:316px;width:1px;height:592px;background:#e0e0e0;"></div>
<div class="b " style="left:973px;top:316px;width:1px;height:592px;background:#e0e0e0;"></div>
<div class="b " style="left:1074px;top:316px;width:1px;height:592px;background:#e0e0e0;"></div>
<div class="b " style="left:1175px;top:316px;width:1px;height:592px;background:#e0e0e0;"></div>
<div class="b " style="left:1276px;top:316px;width:1px;height:592px;background:#e0e0e0;"></div>
<div class="b " style="left:1377px;top:316px;width:1px;height:592px;background:#e0e0e0;"></div>
<div class="b " style="left:1478px;top:316px;width:1px;height:592px;background:#e0e0e0;"></div>
<div class="b " style="left:1579px;top:316px;width:1px;height:592px;background:#e0e0e0;"></div>
<div class="b " style="left:1680px;top:316px;width:1px;height:592px;background:#e0e0e0;"></div>
<div class="t " style="left:574.5px;top:317px;font-size:12px;line-height:26px;color:#212121;letter-spacing:-0.210px;font-weight:bold;">CH1</div>
<div class="t " style="left:574.5px;top:343px;font-size:12px;line-height:26px;color:#212121;letter-spacing:0.110px;-webkit-text-stroke:0.160px;">0.9</div>
<div class="b " style="left:576px;top:375px;width:14px;height:14px;background:#c58cff;"></div>
<div class="t " style="left:598.3px;top:369px;font-size:12px;line-height:26px;color:#212121;letter-spacing:-0.147px;-webkit-text-stroke:0.160px;">T-100</div>
<div class="t " style="left:574.5px;top:395px;font-size:12px;line-height:26px;color:#212121;letter-spacing:0.220px;-webkit-text-stroke:0.160px;">13 Jul</div>
<div class="t " style="left:675.5px;top:317px;font-size:12px;line-height:26px;color:#212121;letter-spacing:-0.210px;font-weight:bold;">CH2</div>
<div class="t " style="left:675.5px;top:343px;font-size:12px;line-height:26px;color:#212121;letter-spacing:0.110px;-webkit-text-stroke:0.160px;">1.2</div>
<div class="b " style="left:677px;top:375px;width:14px;height:14px;background:#c58cff;"></div>
<div class="t " style="left:699.3px;top:369px;font-size:12px;line-height:26px;color:#212121;letter-spacing:-0.147px;-webkit-text-stroke:0.160px;">T-100</div>
<div class="t " style="left:675.5px;top:395px;font-size:12px;line-height:26px;color:#212121;letter-spacing:0.220px;-webkit-text-stroke:0.160px;">14 Jul</div>
<div class="t " style="left:776.5px;top:317px;font-size:12px;line-height:26px;color:#212121;letter-spacing:-0.210px;font-weight:bold;">CH3</div>
<div class="t " style="left:776.5px;top:343px;font-size:12px;line-height:26px;color:#212121;letter-spacing:0.110px;-webkit-text-stroke:0.160px;">1.5</div>
<div class="b " style="left:778px;top:375px;width:14px;height:14px;background:#c58cff;"></div>
<div class="t " style="left:800.3px;top:369px;font-size:12px;line-height:26px;color:#212121;letter-spacing:-0.147px;-webkit-text-stroke:0.160px;">T-100</div>
<div class="t " style="left:776.5px;top:395px;font-size:12px;line-height:26px;color:#212121;letter-spacing:0.220px;-webkit-text-stroke:0.160px;">15 Jul</div>
<svg class="i" style="left:850px;top:321.3px;" width="18" height="18" viewBox="0 0 24 24"><path fill="#757575" d="M3.9 12c0-1.71 1.39-3.1 3.1-3.1h4V7H7c-2.76 0-5 2.24-5 5s2.24 5 5 5h4v-1.9H7c-1.71 0-3.1-1.39-3.1-3.1zM8 13h8v-2H8v2zm9-6h-4v1.9h4c1.71 0 3.1 1.39 3.1 3.1s-1.39 3.1-3.1 3.1h-4V17h4c2.76 0 5-2.24 5-5s-2.24-5-5-5z"/></svg>
<div class="t " style="left:877.5px;top:317px;font-size:12px;line-height:26px;color:#212121;letter-spacing:-0.210px;font-weight:bold;">CH4</div>
<div class="t " style="left:877.5px;top:343px;font-size:12px;line-height:26px;color:#212121;letter-spacing:0.110px;-webkit-text-stroke:0.160px;">0.8</div>
<div class="b " style="left:879px;top:375px;width:14px;height:14px;background:#c58cff;"></div>
<div class="t " style="left:901.3px;top:369px;font-size:12px;line-height:26px;color:#212121;letter-spacing:-0.147px;-webkit-text-stroke:0.160px;">T-100</div>
<div class="t " style="left:877.5px;top:395px;font-size:12px;line-height:26px;color:#212121;letter-spacing:0.220px;-webkit-text-stroke:0.160px;">16 Jul</div>
<div class="t " style="left:978.5px;top:317px;font-size:12px;line-height:26px;color:#212121;letter-spacing:-0.210px;font-weight:bold;">CH6</div>
<div class="t " style="left:978.5px;top:343px;font-size:12px;line-height:26px;color:#212121;letter-spacing:0.110px;-webkit-text-stroke:0.160px;">1.1</div>
<div class="b " style="left:980px;top:375px;width:14px;height:14px;background:#c58cff;"></div>
<div class="t " style="left:1002.3px;top:369px;font-size:12px;line-height:26px;color:#212121;letter-spacing:-0.147px;-webkit-text-stroke:0.160px;">T-100</div>
<div class="t " style="left:978.5px;top:395px;font-size:12px;line-height:26px;color:#212121;letter-spacing:0.220px;-webkit-text-stroke:0.160px;">18 Jul</div>
<svg class="i" style="left:1052px;top:321.3px;" width="18" height="18" viewBox="0 0 24 24"><path fill="#f44336" d="M12 2C6.48 2 2 6.48 2 12s4.48 10 10 10 10-4.48 10-10S17.52 2 12 2zM4 12c0-4.42 3.58-8 8-8 1.85 0 3.55.63 4.9 1.69L5.69 16.9C4.63 15.55 4 13.85 4 12zm8 8c-1.85 0-3.55-.63-4.9-1.69L18.31 7.1C19.37 8.45 20 10.15 20 12c0 4.42-3.58 8-8 8z"/></svg>
<div class="t " style="left:1079.5px;top:317px;font-size:12px;line-height:26px;color:#212121;letter-spacing:-0.210px;font-weight:bold;">CH7</div>
<div class="t " style="left:1079.5px;top:343px;font-size:12px;line-height:26px;color:#212121;letter-spacing:0.110px;-webkit-text-stroke:0.160px;">1.5</div>
<div class="b " style="left:1081px;top:375px;width:14px;height:14px;background:#c58cff;"></div>
<div class="t " style="left:1103.3px;top:369px;font-size:12px;line-height:26px;color:#212121;letter-spacing:-0.147px;-webkit-text-stroke:0.160px;">T-100</div>
<div class="t " style="left:1079.5px;top:395px;font-size:12px;line-height:26px;color:#212121;letter-spacing:0.220px;-webkit-text-stroke:0.160px;">19 Jul</div>
<div class="t " style="left:1180.5px;top:317px;font-size:12px;line-height:26px;color:#212121;letter-spacing:-0.210px;font-weight:bold;">CH8</div>
<div class="t " style="left:1180.5px;top:343px;font-size:12px;line-height:26px;color:#212121;letter-spacing:0.110px;-webkit-text-stroke:0.160px;">0.8</div>
<div class="b " style="left:1182px;top:375px;width:14px;height:14px;background:#c58cff;"></div>
<div class="t " style="left:1204.3px;top:369px;font-size:12px;line-height:26px;color:#212121;letter-spacing:-0.147px;-webkit-text-stroke:0.160px;">T-100</div>
<div class="t " style="left:1180.5px;top:395px;font-size:12px;line-height:26px;color:#212121;letter-spacing:0.220px;-webkit-text-stroke:0.160px;">19 Jul</div>
<div class="t " style="left:1281.5px;top:317px;font-size:12px;line-height:26px;color:#212121;letter-spacing:-0.210px;font-weight:bold;">CH9</div>
<div class="t " style="left:1281.5px;top:343px;font-size:12px;line-height:26px;color:#212121;letter-spacing:0.110px;-webkit-text-stroke:0.160px;">1.1</div>
<div class="b " style="left:1283px;top:375px;width:14px;height:14px;background:#c58cff;"></div>
<div class="t " style="left:1305.3px;top:369px;font-size:12px;line-height:26px;color:#212121;letter-spacing:-0.147px;-webkit-text-stroke:0.160px;">T-100</div>
<div class="t " style="left:1281.5px;top:395px;font-size:12px;line-height:26px;color:#212121;letter-spacing:0.220px;-webkit-text-stroke:0.160px;">20 Jul</div>
<svg class="i" style="left:1355px;top:321.3px;" width="18" height="18" viewBox="0 0 24 24"><path fill="#f44336" d="M12 2C6.48 2 2 6.48 2 12s4.48 10 10 10 10-4.48 10-10S17.52 2 12 2zM4 12c0-4.42 3.58-8 8-8 1.85 0 3.55.63 4.9 1.69L5.69 16.9C4.63 15.55 4 13.85 4 12zm8 8c-1.85 0-3.55-.63-4.9-1.69L18.31 7.1C19.37 8.45 20 10.15 20 12c0 4.42-3.58 8-8 8z"/></svg>
<div class="t " style="left:1382.5px;top:317px;font-size:12px;line-height:26px;color:#212121;letter-spacing:-0.092px;font-weight:bold;">CH10</div>
<div class="t " style="left:1382.5px;top:343px;font-size:12px;line-height:26px;color:#212121;letter-spacing:0.110px;-webkit-text-stroke:0.160px;">1.0</div>
<div class="b " style="left:1384px;top:375px;width:14px;height:14px;background:#c58cff;"></div>
<div class="t " style="left:1406.3px;top:369px;font-size:12px;line-height:26px;color:#212121;letter-spacing:-0.147px;-webkit-text-stroke:0.160px;">T-100</div>
<div class="t " style="left:1382.5px;top:395px;font-size:12px;line-height:26px;color:#212121;letter-spacing:0.220px;-webkit-text-stroke:0.160px;">23 Jul</div>
<div class="t " style="left:1483.5px;top:317px;font-size:12px;line-height:26px;color:#212121;letter-spacing:0.073px;font-weight:bold;">CH11</div>
<div class="t " style="left:1483.5px;top:343px;font-size:12px;line-height:26px;color:#212121;letter-spacing:0.110px;-webkit-text-stroke:0.160px;">2.0</div>
<div class="b " style="left:1485px;top:375px;width:14px;height:14px;background:#c58cff;"></div>
<div class="t " style="left:1507.3px;top:369px;font-size:12px;line-height:26px;color:#212121;letter-spacing:-0.147px;-webkit-text-stroke:0.160px;">T-100</div>
<div class="t " style="left:1483.5px;top:395px;font-size:12px;line-height:26px;color:#212121;letter-spacing:0.220px;-webkit-text-stroke:0.160px;">24 Jul</div>
<div class="t " style="left:1584.5px;top:317px;font-size:12px;line-height:26px;color:#212121;letter-spacing:-0.092px;font-weight:bold;">CH12</div>
<div class="t " style="left:1584.5px;top:343px;font-size:12px;line-height:26px;color:#212121;letter-spacing:0.110px;-webkit-text-stroke:0.160px;">0.4</div>
<div class="b " style="left:1586px;top:375px;width:14px;height:14px;background:#c58cff;"></div>
<div class="t " style="left:1608.3px;top:369px;font-size:12px;line-height:26px;color:#212121;letter-spacing:-0.147px;-webkit-text-stroke:0.160px;">T-100</div>
<div class="t " style="left:1584.5px;top:395px;font-size:12px;line-height:26px;color:#212121;letter-spacing:0.220px;-webkit-text-stroke:0.160px;">25 Jul</div>
<svg class="i" style="left:1688.35px;top:358.75px;" width="20.5" height="20.5" viewBox="0 0 24 24"><path fill="#616161" d="M19 13h-6v6h-2v-6H5v-2h6V5h2v6h6v2z"/></svg>
<svg class="i" style="left:16px;top:329px;" width="18" height="18" viewBox="0 0 24 24"><path fill="#616161" d="M16.59 8.59L12 13.17 7.41 8.59 6 10l6 6 6-6z"/></svg>
<svg class="i" style="left:38.4px;top:325px;" width="24" height="24" viewBox="0 0 24 24"><path fill="#3d5afe" d="M12 3L1 9l4 2.18v6L12 21l7-3.82v-6l2-1.09V17h2V9L12 3zm6.82 6L12 12.72 5.18 9 12 5.28 18.82 9zM17 15.99l-5 2.73-5-2.73v-3.72L12 15l5-2.73v3.72z"/></svg>
<div class="t " style="left:70.2px;top:324.4px;font-size:14px;line-height:26px;color:#212121;letter-spacing:0.021px;-webkit-text-stroke:0.160px;">Fighter TRA cse 40</div>
<svg class="i" style="left:202.559px;top:328px;" width="18" height="18" viewBox="0 0 24 24"><path fill="#616161" d="M6 10c-1.1 0-2 .9-2 2s.9 2 2 2 2-.9 2-2-.9-2-2-2zm12 0c-1.1 0-2 .9-2 2s.9 2 2 2 2-.9 2-2-.9-2-2-2zm-6 0c-1.1 0-2 .9-2 2s.9 2 2 2 2-.9 2-2-.9-2-2-2z"/></svg>
<svg class="i" style="left:226.259px;top:328px;" width="18" height="18" viewBox="0 0 24 24"><path fill="#616161" d="M19 13h-6v6h-2v-6H5v-2h6V5h2v6h6v2z"/></svg>
<div class="t " style="left:70.6px;top:348.4px;font-size:12px;line-height:26px;color:#757575;letter-spacing:0.009px;-webkit-text-stroke:0.160px;">Planned: 12 -25 Jul, 2026</div>
<svg class="i" style="left:15px;top:401px;" width="20" height="20" viewBox="0 0 24 24"><path fill="#616161" d="M19 5v14H5V5h14m0-2H5c-1.1 0-2 .9-2 2v14c0 1.1.9 2 2 2h14c1.1 0 2-.9 2-2V5c0-1.1-.9-2-2-2z"/></svg>
<svg class="i" style="left:42px;top:402px;" width="18" height="18" viewBox="0 0 24 24"><path fill="#616161" d="M7.41 18.59L8.83 20 12 16.83 15.17 20l1.41-1.41L12 14l-4.59 4.59zm9.18-13.18L15.17 4 12 7.17 8.83 4 7.41 5.41 12 10l4.59-4.59z"/></svg>
<div class="t " style="left:68.2px;top:401px;font-size:10px;line-height:20px;color:#666;letter-spacing:0.202px;-webkit-text-stroke:0.380px;">Student</div>
<div class="t " style="left:152.2px;top:401px;font-size:10px;line-height:20px;color:#666;letter-spacing:0.230px;-webkit-text-stroke:0.380px;">P.Instructor</div>
<div class="t " style="left:236.8px;top:401px;font-size:10px;line-height:20px;color:#666;letter-spacing:0.227px;-webkit-text-stroke:0.380px;">S. Instructor</div>
<div class="t " style="left:321.2px;top:401px;font-size:10px;line-height:20px;color:#666;letter-spacing:0.290px;-webkit-text-stroke:0.380px;">Last flown</div>
<div class="t " style="left:405.7px;top:401px;font-size:10px;line-height:20px;color:#666;letter-spacing:0.082px;-webkit-text-stroke:0.380px;">Course</div>
<div class="t " style="left:489.8px;top:401px;font-size:10px;line-height:20px;color:#666;letter-spacing:0.090px;-webkit-text-stroke:0.380px;">Sub group</div>
<svg class="i" style="left:42px;top:426.2px;" width="18" height="18" viewBox="0 0 24 24"><path fill="#616161" d="M10 6L8.59 7.41 13.17 12l-4.58 4.59L10 18l6-6z"/></svg>
<div class="t " style="left:68.3px;top:422px;font-size:12px;line-height:26px;color:#212121;letter-spacing:-0.099px;-webkit-text-stroke:0.160px;">T. Rivers</div>
<div class="t " style="left:152.3px;top:422px;font-size:12px;line-height:26px;color:#212121;letter-spacing:0.088px;-webkit-text-stroke:0.160px;">J. Falcon</div>
<div class="t " style="left:236.8px;top:422px;font-size:12px;line-height:26px;color:#212121;letter-spacing:0.181px;-webkit-text-stroke:0.160px;">M. Harlow</div>
<div class="t " style="left:321.2px;top:422px;font-size:12px;line-height:26px;color:#212121;letter-spacing:0.082px;-webkit-text-stroke:0.160px;">Jul 12, 2026</div>
<div class="b " style="left:407.4px;top:428.2px;width:13.6px;height:13.6px;background:#4859f8;"></div>
<div class="t " style="left:429.7px;top:422px;font-size:12px;line-height:26px;color:#212121;letter-spacing:0.120px;-webkit-text-stroke:0.160px;">Training</div>
<div class="t " style="left:490px;top:422px;font-size:12px;line-height:26px;color:#212121;letter-spacing:0.190px;-webkit-text-stroke:0.160px;">1</div>
<div class="b " style="left:575.1px;top:427.1px;width:15.8px;height:15.8px;background:#4caf50;border-radius:50%;"></div>
<div class="t " style="left:598.6px;top:422px;font-size:12px;line-height:26px;color:#212121;letter-spacing:0.368px;-webkit-text-stroke:0.160px;">11 Jul</div>
<div class="b " style="left:676.1px;top:427.1px;width:15.8px;height:15.8px;background:#4caf50;border-radius:50%;"></div>
<div class="t " style="left:699.6px;top:422px;font-size:12px;line-height:26px;color:#212121;letter-spacing:0.220px;-webkit-text-stroke:0.160px;">Jul 14</div>
<div class="b " style="left:777.1px;top:427.1px;width:15.8px;height:15.8px;background:#f44336;border-radius:50%;"></div>
<div class="t " style="left:800.6px;top:422px;font-size:12px;line-height:26px;color:#212121;letter-spacing:0.220px;-webkit-text-stroke:0.160px;">14 Jul</div>
<div class="b " style="left:878.1px;top:427.1px;width:15.8px;height:15.8px;background:#ffb74d;border-radius:50%;"></div>
<div class="t " style="left:901.6px;top:422px;font-size:12px;line-height:26px;color:#212121;letter-spacing:0.220px;-webkit-text-stroke:0.160px;">17 Jul</div>
<div class="b " style="left:979.1px;top:427.1px;width:15.8px;height:15.8px;background:#03a9f4;border-radius:50%;"></div>
<div class="t " style="left:1002.6px;top:422px;font-size:12px;line-height:26px;color:#212121;letter-spacing:0.220px;-webkit-text-stroke:0.160px;">16 Jul</div>
<div class="b " style="left:1080.7px;top:427.5px;width:14.7px;height:14.7px;background:#fff;border-radius:50%;border:1.100px solid #dcdcdc;box-sizing:border-box;"></div>
<div class="t " style="left:1102.8px;top:422px;font-size:12px;line-height:26px;color:#212121;letter-spacing:-0.680px;-webkit-text-stroke:0.160px;">-</div>
<div class="b " style="left:1181.7px;top:427.5px;width:14.7px;height:14.7px;background:#fff;border-radius:50%;border:1.100px solid #dcdcdc;box-sizing:border-box;"></div>
<div class="t " style="left:1203.8px;top:422px;font-size:12px;line-height:26px;color:#212121;letter-spacing:-0.680px;-webkit-text-stroke:0.160px;">-</div>
<div class="b " style="left:1282.7px;top:427.5px;width:14.7px;height:14.7px;background:#fff;border-radius:50%;border:1.100px solid #dcdcdc;box-sizing:border-box;"></div>
<div class="t " style="left:1304.8px;top:422px;font-size:12px;line-height:26px;color:#212121;letter-spacing:-0.680px;-webkit-text-stroke:0.160px;">-</div>
<div class="b " style="left:1383.7px;top:427.5px;width:14.7px;height:14.7px;background:#fff;border-radius:50%;border:1.100px solid #dcdcdc;box-sizing:border-box;"></div>
<div class="t " style="left:1405.8px;top:422px;font-size:12px;line-height:26px;color:#212121;letter-spacing:-0.680px;-webkit-text-stroke:0.160px;">-</div>
<div class="b " style="left:1484.7px;top:427.5px;width:14.7px;height:14.7px;background:#fff;border-radius:50%;border:1.100px solid #dcdcdc;box-sizing:border-box;"></div>
<div class="t " style="left:1506.8px;top:422px;font-size:12px;line-height:26px;color:#212121;letter-spacing:-0.680px;-webkit-text-stroke:0.160px;">-</div>
<div class="b " style="left:1585.7px;top:427.5px;width:14.7px;height:14.7px;background:#fff;border-radius:50%;border:1.100px solid #dcdcdc;box-sizing:border-box;"></div>
<div class="t " style="left:1607.8px;top:422px;font-size:12px;line-height:26px;color:#212121;letter-spacing:-0.680px;-webkit-text-stroke:0.160px;">-</div>
<svg class="i" style="left:42px;top:643.2px;" width="18" height="18" viewBox="0 0 24 24"><path fill="#616161" d="M16.59 8.59L12 13.17 7.41 8.59 6 10l6 6 6-6z"/></svg>
<div class="t " style="left:68.3px;top:639px;font-size:12px;line-height:26px;color:#212121;letter-spacing:0.197px;-webkit-text-stroke:0.160px;">J. Thom</div>
<div class="t " style="left:113.105px;top:640.3px;font-size:8.3px;line-height:26px;color:#212121;letter-spacing:-0.900px;-webkit-text-stroke:0.160px;">…</div>
<svg class="i" style="left:126.2px;top:643px;" width="18" height="18" viewBox="0 0 24 24"><path fill="#03a9f4" d="M6 2c-1.1 0-1.99.9-1.99 2L4 20c0 1.1.89 2 1.99 2H18c1.1 0 2-.9 2-2V8l-6-6H6zm7 7V3.5L18.500 9H13z"/></svg>
<div class="t " style="left:152.3px;top:639px;font-size:12px;line-height:26px;color:#212121;letter-spacing:0.088px;-webkit-text-stroke:0.160px;">J. Falcon</div>
<div class="t " style="left:236.8px;top:639px;font-size:12px;line-height:26px;color:#212121;letter-spacing:0.038px;-webkit-text-stroke:0.160px;">A. Landell</div>
<div class="t " style="left:321.2px;top:639px;font-size:12px;line-height:26px;color:#212121;letter-spacing:0.082px;-webkit-text-stroke:0.160px;">Jul 12, 2026</div>
<div class="b " style="left:407.4px;top:645.2px;width:13.6px;height:13.6px;background:#4859f8;"></div>
<div class="t " style="left:429.7px;top:639px;font-size:12px;line-height:26px;color:#212121;letter-spacing:0.120px;-webkit-text-stroke:0.160px;">Training</div>
<div class="t " style="left:490px;top:639px;font-size:12px;line-height:26px;color:#212121;letter-spacing:0.190px;-webkit-text-stroke:0.160px;">1</div>
<div class="b " style="left:575.1px;top:644.1px;width:15.8px;height:15.8px;background:#4caf50;border-radius:50%;"></div>
<div class="t " style="left:598.6px;top:639px;font-size:12px;line-height:26px;color:#212121;letter-spacing:0.220px;-webkit-text-stroke:0.160px;">15 Jul</div>
<div class="b " style="left:676.1px;top:644.1px;width:15.8px;height:15.8px;background:#4caf50;border-radius:50%;"></div>
<div class="t " style="left:699.6px;top:639px;font-size:12px;line-height:26px;color:#212121;letter-spacing:0.220px;-webkit-text-stroke:0.160px;">14 Jul</div>
<div class="b " style="left:777.1px;top:644.1px;width:15.8px;height:15.8px;background:#03a9f4;border-radius:50%;"></div>
<div class="t " style="left:800.6px;top:639px;font-size:12px;line-height:26px;color:#212121;letter-spacing:0.220px;-webkit-text-stroke:0.160px;">13 Jul</div>
<div class="b " style="left:878.1px;top:644.1px;width:15.8px;height:15.8px;background:#03a9f4;border-radius:50%;"></div>
<div class="t " style="left:901.6px;top:639px;font-size:12px;line-height:26px;color:#212121;letter-spacing:0.220px;-webkit-text-stroke:0.160px;">16 Jul</div>
<div class="b " style="left:979.7px;top:644.5px;width:14.7px;height:14.7px;background:#fff;border-radius:50%;border:1.100px solid #dcdcdc;box-sizing:border-box;"></div>
<div class="t " style="left:1001.8px;top:639px;font-size:12px;line-height:26px;color:#212121;letter-spacing:-0.680px;-webkit-text-stroke:0.160px;">-</div>
<div class="b " style="left:1080.7px;top:644.5px;width:14.7px;height:14.7px;background:#fff;border-radius:50%;border:1.100px solid #dcdcdc;box-sizing:border-box;"></div>
<div class="t " style="left:1102.8px;top:639px;font-size:12px;line-height:26px;color:#212121;letter-spacing:-0.680px;-webkit-text-stroke:0.160px;">-</div>
<div class="b " style="left:1181.7px;top:644.5px;width:14.7px;height:14.7px;background:#fff;border-radius:50%;border:1.100px solid #dcdcdc;box-sizing:border-box;"></div>
<div class="t " style="left:1203.8px;top:639px;font-size:12px;line-height:26px;color:#212121;letter-spacing:-0.680px;-webkit-text-stroke:0.160px;">-</div>
<div class="b " style="left:1282.7px;top:644.5px;width:14.7px;height:14.7px;background:#fff;border-radius:50%;border:1.100px solid #dcdcdc;box-sizing:border-box;"></div>
<div class="t " style="left:1304.8px;top:639px;font-size:12px;line-height:26px;color:#212121;letter-spacing:-0.680px;-webkit-text-stroke:0.160px;">-</div>
<div class="b " style="left:1383.7px;top:644.5px;width:14.7px;height:14.7px;background:#fff;border-radius:50%;border:1.100px solid #dcdcdc;box-sizing:border-box;"></div>
<div class="t " style="left:1405.8px;top:639px;font-size:12px;line-height:26px;color:#212121;letter-spacing:-0.680px;-webkit-text-stroke:0.160px;">-</div>
<div class="b " style="left:1484.7px;top:644.5px;width:14.7px;height:14.7px;background:#fff;border-radius:50%;border:1.100px solid #dcdcdc;box-sizing:border-box;"></div>
<div class="t " style="left:1506.8px;top:639px;font-size:12px;line-height:26px;color:#212121;letter-spacing:-0.680px;-webkit-text-stroke:0.160px;">-</div>
<div class="b " style="left:1585.7px;top:644.5px;width:14.7px;height:14.7px;background:#fff;border-radius:50%;border:1.100px solid #dcdcdc;box-sizing:border-box;"></div>
<div class="t " style="left:1607.8px;top:639px;font-size:12px;line-height:26px;color:#212121;letter-spacing:-0.680px;-webkit-text-stroke:0.160px;">-</div>
<div class="b " style="left:0px;top:665px;width:1681px;height:1px;background:#e0e0e0;"></div>
<svg class="i" style="left:42px;top:670.2px;" width="18" height="18" viewBox="0 0 24 24"><path fill="#616161" d="M10 6L8.59 7.41 13.17 12l-4.58 4.59L10 18l6-6z"/></svg>
<div class="t " style="left:68.3px;top:666px;font-size:12px;line-height:26px;color:#212121;letter-spacing:0.149px;-webkit-text-stroke:0.160px;">A. Johnson</div>
<div class="t " style="left:152.3px;top:666px;font-size:12px;line-height:26px;color:#212121;letter-spacing:0.038px;-webkit-text-stroke:0.160px;">A. Landell</div>
<div class="t " style="left:236.8px;top:666px;font-size:12px;line-height:26px;color:#212121;letter-spacing:0.181px;-webkit-text-stroke:0.160px;">M. Harlow</div>
<div class="t " style="left:321.2px;top:666px;font-size:12px;line-height:26px;color:#212121;letter-spacing:0.082px;-webkit-text-stroke:0.160px;">Jul 13, 2026</div>
<div class="b " style="left:407.4px;top:672.2px;width:13.6px;height:13.6px;background:#4859f8;"></div>
<div class="t " style="left:429.7px;top:666px;font-size:12px;line-height:26px;color:#212121;letter-spacing:0.120px;-webkit-text-stroke:0.160px;">Training</div>
<div class="t " style="left:490px;top:666px;font-size:12px;line-height:26px;color:#212121;letter-spacing:0.190px;-webkit-text-stroke:0.160px;">1</div>
<div class="b " style="left:575.1px;top:671.1px;width:15.8px;height:15.8px;background:#4caf50;border-radius:50%;"></div>
<div class="t " style="left:598.6px;top:666px;font-size:12px;line-height:26px;color:#212121;letter-spacing:0.220px;-webkit-text-stroke:0.160px;">13 Jul</div>
<div class="b " style="left:676.1px;top:671.1px;width:15.8px;height:15.8px;background:#4caf50;border-radius:50%;"></div>
<div class="t " style="left:699.6px;top:666px;font-size:12px;line-height:26px;color:#212121;letter-spacing:0.220px;-webkit-text-stroke:0.160px;">15 Jul</div>
<div class="b " style="left:777.1px;top:671.1px;width:15.8px;height:15.8px;background:#ffb74d;border-radius:50%;"></div>
<div class="t " style="left:800.6px;top:666px;font-size:12px;line-height:26px;color:#212121;letter-spacing:0.220px;-webkit-text-stroke:0.160px;">16 Jul</div>
<div class="b " style="left:878.1px;top:671.1px;width:15.8px;height:15.8px;background:#ffb74d;border-radius:50%;"></div>
<div class="t " style="left:901.6px;top:666px;font-size:12px;line-height:26px;color:#212121;letter-spacing:0.220px;-webkit-text-stroke:0.160px;">18 Jul</div>
<div class="b " style="left:979.1px;top:671.1px;width:15.8px;height:15.8px;background:#03a9f4;border-radius:50%;"></div>
<div class="t " style="left:1002.6px;top:666px;font-size:12px;line-height:26px;color:#212121;letter-spacing:0.220px;-webkit-text-stroke:0.160px;">17 Jul</div>
<div class="b " style="left:1080.7px;top:671.5px;width:14.7px;height:14.7px;background:#fff;border-radius:50%;border:1.100px solid #dcdcdc;box-sizing:border-box;"></div>
<div class="t " style="left:1102.8px;top:666px;font-size:12px;line-height:26px;color:#212121;letter-spacing:-0.680px;-webkit-text-stroke:0.160px;">-</div>
<div class="b " style="left:1181.7px;top:671.5px;width:14.7px;height:14.7px;background:#fff;border-radius:50%;border:1.100px solid #dcdcdc;box-sizing:border-box;"></div>
<div class="t " style="left:1203.8px;top:666px;font-size:12px;line-height:26px;color:#212121;letter-spacing:-0.680px;-webkit-text-stroke:0.160px;">-</div>
<div class="b " style="left:1282.7px;top:671.5px;width:14.7px;height:14.7px;background:#fff;border-radius:50%;border:1.100px solid #dcdcdc;box-sizing:border-box;"></div>
<div class="t " style="left:1304.8px;top:666px;font-size:12px;line-height:26px;color:#212121;letter-spacing:-0.680px;-webkit-text-stroke:0.160px;">-</div>
<div class="b " style="left:1383.7px;top:671.5px;width:14.7px;height:14.7px;background:#fff;border-radius:50%;border:1.100px solid #dcdcdc;box-sizing:border-box;"></div>
<div class="t " style="left:1405.8px;top:666px;font-size:12px;line-height:26px;color:#212121;letter-spacing:-0.680px;-webkit-text-stroke:0.160px;">-</div>
<div class="b " style="left:1484.7px;top:671.5px;width:14.7px;height:14.7px;background:#fff;border-radius:50%;border:1.100px solid #dcdcdc;box-sizing:border-box;"></div>
<div class="t " style="left:1506.8px;top:666px;font-size:12px;line-height:26px;color:#212121;letter-spacing:-0.680px;-webkit-text-stroke:0.160px;">-</div>
<div class="b " style="left:1585.7px;top:671.5px;width:14.7px;height:14.7px;background:#fff;border-radius:50%;border:1.100px solid #dcdcdc;box-sizing:border-box;"></div>
<div class="t " style="left:1607.8px;top:666px;font-size:12px;line-height:26px;color:#212121;letter-spacing:-0.680px;-webkit-text-stroke:0.160px;">-</div>
<div class="b " style="left:0px;top:692px;width:1681px;height:1px;background:#e0e0e0;"></div>
<svg class="i" style="left:42px;top:697.2px;" width="18" height="18" viewBox="0 0 24 24"><path fill="#616161" d="M10 6L8.59 7.41 13.17 12l-4.58 4.59L10 18l6-6z"/></svg>
<div class="t " style="left:68.3px;top:693px;font-size:12px;line-height:26px;color:#212121;letter-spacing:0.146px;-webkit-text-stroke:0.160px;">L. Johnson</div>
<div class="t " style="left:152.3px;top:693px;font-size:12px;line-height:26px;color:#212121;letter-spacing:0.038px;-webkit-text-stroke:0.160px;">A. Landell</div>
<div class="t " style="left:236.8px;top:693px;font-size:12px;line-height:26px;color:#212121;letter-spacing:0.181px;-webkit-text-stroke:0.160px;">M. Harlow</div>
<div class="t " style="left:321.2px;top:693px;font-size:12px;line-height:26px;color:#212121;letter-spacing:0.082px;-webkit-text-stroke:0.160px;">Jul 12, 2026</div>
<div class="b " style="left:407.4px;top:699.2px;width:13.6px;height:13.6px;background:#4859f8;"></div>
<div class="t " style="left:429.7px;top:693px;font-size:12px;line-height:26px;color:#212121;letter-spacing:0.120px;-webkit-text-stroke:0.160px;">Training</div>
<div class="t " style="left:490px;top:693px;font-size:12px;line-height:26px;color:#212121;letter-spacing:0.190px;-webkit-text-stroke:0.160px;">1</div>
<div class="b " style="left:575.1px;top:698.1px;width:15.8px;height:15.8px;background:#4caf50;border-radius:50%;"></div>
<div class="t " style="left:598.6px;top:693px;font-size:12px;line-height:26px;color:#212121;letter-spacing:0.220px;-webkit-text-stroke:0.160px;">14 Jul</div>
<div class="b " style="left:676.1px;top:698.1px;width:15.8px;height:15.8px;background:#f44336;border-radius:50%;"></div>
<div class="t " style="left:699.6px;top:693px;font-size:12px;line-height:26px;color:#212121;letter-spacing:0.220px;-webkit-text-stroke:0.160px;">14 Jul</div>
<div class="b " style="left:777.1px;top:698.1px;width:15.8px;height:15.8px;background:#4caf50;border-radius:50%;"></div>
<div class="t " style="left:800.6px;top:693px;font-size:12px;line-height:26px;color:#212121;letter-spacing:0.220px;-webkit-text-stroke:0.160px;">15 Jul</div>
<div class="b " style="left:878.1px;top:698.1px;width:15.8px;height:15.8px;background:#03a9f4;border-radius:50%;"></div>
<div class="t " style="left:901.6px;top:693px;font-size:12px;line-height:26px;color:#212121;letter-spacing:0.220px;-webkit-text-stroke:0.160px;">15 Jul</div>
<div class="b " style="left:979.1px;top:698.1px;width:15.8px;height:15.8px;background:#03a9f4;border-radius:50%;"></div>
<div class="t " style="left:1002.6px;top:693px;font-size:12px;line-height:26px;color:#212121;letter-spacing:0.220px;-webkit-text-stroke:0.160px;">18 Jul</div>
<div class="b " style="left:1080.7px;top:698.5px;width:14.7px;height:14.7px;background:#fff;border-radius:50%;border:1.100px solid #dcdcdc;box-sizing:border-box;"></div>
<div class="t " style="left:1102.8px;top:693px;font-size:12px;line-height:26px;color:#212121;letter-spacing:-0.680px;-webkit-text-stroke:0.160px;">-</div>
<div class="b " style="left:1181.7px;top:698.5px;width:14.7px;height:14.7px;background:#fff;border-radius:50%;border:1.100px solid #dcdcdc;box-sizing:border-box;"></div>
<div class="t " style="left:1203.8px;top:693px;font-size:12px;line-height:26px;color:#212121;letter-spacing:-0.680px;-webkit-text-stroke:0.160px;">-</div>
<div class="b " style="left:1282.7px;top:698.5px;width:14.7px;height:14.7px;background:#fff;border-radius:50%;border:1.100px solid #dcdcdc;box-sizing:border-box;"></div>
<div class="t " style="left:1304.8px;top:693px;font-size:12px;line-height:26px;color:#212121;letter-spacing:-0.680px;-webkit-text-stroke:0.160px;">-</div>
<div class="b " style="left:1383.7px;top:698.5px;width:14.7px;height:14.7px;background:#fff;border-radius:50%;border:1.100px solid #dcdcdc;box-sizing:border-box;"></div>
<div class="t " style="left:1405.8px;top:693px;font-size:12px;line-height:26px;color:#212121;letter-spacing:-0.680px;-webkit-text-stroke:0.160px;">-</div>
<div class="b " style="left:1484.7px;top:698.5px;width:14.7px;height:14.7px;background:#fff;border-radius:50%;border:1.100px solid #dcdcdc;box-sizing:border-box;"></div>
<div class="t " style="left:1506.8px;top:693px;font-size:12px;line-height:26px;color:#212121;letter-spacing:-0.680px;-webkit-text-stroke:0.160px;">-</div>
<div class="b " style="left:1585.7px;top:698.5px;width:14.7px;height:14.7px;background:#fff;border-radius:50%;border:1.100px solid #dcdcdc;box-sizing:border-box;"></div>
<div class="t " style="left:1607.8px;top:693px;font-size:12px;line-height:26px;color:#212121;letter-spacing:-0.680px;-webkit-text-stroke:0.160px;">-</div>
<div class="b " style="left:0px;top:719px;width:1681px;height:1px;background:#e0e0e0;"></div>
<svg class="i" style="left:42px;top:724.2px;" width="18" height="18" viewBox="0 0 24 24"><path fill="#616161" d="M10 6L8.59 7.41 13.17 12l-4.58 4.59L10 18l6-6z"/></svg>
<div class="t " style="left:68.3px;top:720px;font-size:12px;line-height:26px;color:#212121;letter-spacing:0.018px;-webkit-text-stroke:0.160px;">M. Davis</div>
<div class="t " style="left:152.3px;top:720px;font-size:12px;line-height:26px;color:#212121;letter-spacing:0.088px;-webkit-text-stroke:0.160px;">J. Falcon</div>
<div class="t " style="left:236.8px;top:720px;font-size:12px;line-height:26px;color:#212121;letter-spacing:0.038px;-webkit-text-stroke:0.160px;">A. Landell</div>
<div class="t " style="left:321.2px;top:720px;font-size:12px;line-height:26px;color:#212121;letter-spacing:0.082px;-webkit-text-stroke:0.160px;">Jul 12, 2026</div>
<div class="b " style="left:407.4px;top:726.2px;width:13.6px;height:13.6px;background:#4859f8;"></div>
<div class="t " style="left:429.7px;top:720px;font-size:12px;line-height:26px;color:#212121;letter-spacing:0.120px;-webkit-text-stroke:0.160px;">Training</div>
<div class="t " style="left:490px;top:720px;font-size:12px;line-height:26px;color:#212121;letter-spacing:0.190px;-webkit-text-stroke:0.160px;">1</div>
<div class="b " style="left:575.1px;top:725.1px;width:15.8px;height:15.8px;background:#4caf50;border-radius:50%;"></div>
<div class="t " style="left:598.6px;top:720px;font-size:12px;line-height:26px;color:#212121;letter-spacing:0.220px;-webkit-text-stroke:0.160px;">12 Jul</div>
<div class="b " style="left:676.1px;top:725.1px;width:15.8px;height:15.8px;background:#4caf50;border-radius:50%;"></div>
<div class="t " style="left:699.6px;top:720px;font-size:12px;line-height:26px;color:#212121;letter-spacing:0.220px;-webkit-text-stroke:0.160px;">13 Jul</div>
<div class="b " style="left:777.1px;top:725.1px;width:15.8px;height:15.8px;background:#4caf50;border-radius:50%;"></div>
<div class="t " style="left:800.6px;top:720px;font-size:12px;line-height:26px;color:#212121;letter-spacing:0.220px;-webkit-text-stroke:0.160px;">14 Jul</div>
<div class="b " style="left:878.1px;top:725.1px;width:15.8px;height:15.8px;background:#03a9f4;border-radius:50%;"></div>
<div class="t " style="left:901.6px;top:720px;font-size:12px;line-height:26px;color:#212121;letter-spacing:0.220px;-webkit-text-stroke:0.160px;">17 Jul</div>
<div class="b " style="left:979.1px;top:725.1px;width:15.8px;height:15.8px;background:#03a9f4;border-radius:50%;"></div>
<div class="t " style="left:1002.6px;top:720px;font-size:12px;line-height:26px;color:#212121;letter-spacing:0.220px;-webkit-text-stroke:0.160px;">19 Jul</div>
<div class="b " style="left:1080.7px;top:725.5px;width:14.7px;height:14.7px;background:#fff;border-radius:50%;border:1.100px solid #dcdcdc;box-sizing:border-box;"></div>
<div class="t " style="left:1102.8px;top:720px;font-size:12px;line-height:26px;color:#212121;letter-spacing:-0.680px;-webkit-text-stroke:0.160px;">-</div>
<div class="b " style="left:1181.7px;top:725.5px;width:14.7px;height:14.7px;background:#fff;border-radius:50%;border:1.100px solid #dcdcdc;box-sizing:border-box;"></div>
<div class="t " style="left:1203.8px;top:720px;font-size:12px;line-height:26px;color:#212121;letter-spacing:-0.680px;-webkit-text-stroke:0.160px;">-</div>
<div class="b " style="left:1282.7px;top:725.5px;width:14.7px;height:14.7px;background:#fff;border-radius:50%;border:1.100px solid #dcdcdc;box-sizing:border-box;"></div>
<div class="t " style="left:1304.8px;top:720px;font-size:12px;line-height:26px;color:#212121;letter-spacing:-0.680px;-webkit-text-stroke:0.160px;">-</div>
<div class="b " style="left:1383.7px;top:725.5px;width:14.7px;height:14.7px;background:#fff;border-radius:50%;border:1.100px solid #dcdcdc;box-sizing:border-box;"></div>
<div class="t " style="left:1405.8px;top:720px;font-size:12px;line-height:26px;color:#212121;letter-spacing:-0.680px;-webkit-text-stroke:0.160px;">-</div>
<div class="b " style="left:1484.7px;top:725.5px;width:14.7px;height:14.7px;background:#fff;border-radius:50%;border:1.100px solid #dcdcdc;box-sizing:border-box;"></div>
<div class="t " style="left:1506.8px;top:720px;font-size:12px;line-height:26px;color:#212121;letter-spacing:-0.680px;-webkit-text-stroke:0.160px;">-</div>
<div class="b " style="left:1585.7px;top:725.5px;width:14.7px;height:14.7px;background:#fff;border-radius:50%;border:1.100px solid #dcdcdc;box-sizing:border-box;"></div>
<div class="t " style="left:1607.8px;top:720px;font-size:12px;line-height:26px;color:#212121;letter-spacing:-0.680px;-webkit-text-stroke:0.160px;">-</div>
<div class="b " style="left:0px;top:746px;width:1681px;height:1px;background:#e0e0e0;"></div>
<svg class="i" style="left:42px;top:751.2px;" width="18" height="18" viewBox="0 0 24 24"><path fill="#616161" d="M10 6L8.59 7.41 13.17 12l-4.58 4.59L10 18l6-6z"/></svg>
<div class="t " style="left:68.3px;top:747px;font-size:12px;line-height:26px;color:#212121;letter-spacing:0.024px;-webkit-text-stroke:0.160px;">J. Garcia</div>
<div class="t " style="left:152.3px;top:747px;font-size:12px;line-height:26px;color:#212121;letter-spacing:0.088px;-webkit-text-stroke:0.160px;">J. Falcon</div>
<div class="t " style="left:236.8px;top:747px;font-size:12px;line-height:26px;color:#212121;letter-spacing:0.181px;-webkit-text-stroke:0.160px;">M. Harlow</div>
<div class="t " style="left:321.2px;top:747px;font-size:12px;line-height:26px;color:#212121;letter-spacing:0.157px;-webkit-text-stroke:0.160px;">Jul 11, 2026</div>
<div class="b " style="left:407.4px;top:753.2px;width:13.6px;height:13.6px;background:#4859f8;"></div>
<div class="t " style="left:429.7px;top:747px;font-size:12px;line-height:26px;color:#212121;letter-spacing:0.120px;-webkit-text-stroke:0.160px;">Training</div>
<div class="t " style="left:490px;top:747px;font-size:12px;line-height:26px;color:#212121;letter-spacing:0.190px;-webkit-text-stroke:0.160px;">1</div>
<div class="b " style="left:575.1px;top:752.1px;width:15.8px;height:15.8px;background:#4caf50;border-radius:50%;"></div>
<div class="t " style="left:598.6px;top:747px;font-size:12px;line-height:26px;color:#212121;letter-spacing:0.368px;-webkit-text-stroke:0.160px;">11 Jul</div>
<div class="b " style="left:676.1px;top:752.1px;width:15.8px;height:15.8px;background:#4caf50;border-radius:50%;"></div>
<div class="t " style="left:699.6px;top:747px;font-size:12px;line-height:26px;color:#212121;letter-spacing:0.220px;-webkit-text-stroke:0.160px;">13 Jul</div>
<div class="b " style="left:777.1px;top:752.1px;width:15.8px;height:15.8px;background:#4caf50;border-radius:50%;"></div>
<div class="t " style="left:800.6px;top:747px;font-size:12px;line-height:26px;color:#212121;letter-spacing:0.220px;-webkit-text-stroke:0.160px;">14 Jul</div>
<div class="b " style="left:878.1px;top:752.1px;width:15.8px;height:15.8px;background:#03a9f4;border-radius:50%;"></div>
<div class="t " style="left:901.6px;top:747px;font-size:12px;line-height:26px;color:#212121;letter-spacing:0.220px;-webkit-text-stroke:0.160px;">15 Jul</div>
<div class="b " style="left:979.1px;top:752.1px;width:15.8px;height:15.8px;background:#03a9f4;border-radius:50%;"></div>
<div class="t " style="left:1002.6px;top:747px;font-size:12px;line-height:26px;color:#212121;letter-spacing:0.220px;-webkit-text-stroke:0.160px;">16 Jul</div>
<div class="b " style="left:1080.7px;top:752.5px;width:14.7px;height:14.7px;background:#fff;border-radius:50%;border:1.100px solid #dcdcdc;box-sizing:border-box;"></div>
<div class="t " style="left:1102.8px;top:747px;font-size:12px;line-height:26px;color:#212121;letter-spacing:-0.680px;-webkit-text-stroke:0.160px;">-</div>
<div class="b " style="left:1181.7px;top:752.5px;width:14.7px;height:14.7px;background:#fff;border-radius:50%;border:1.100px solid #dcdcdc;box-sizing:border-box;"></div>
<div class="t " style="left:1203.8px;top:747px;font-size:12px;line-height:26px;color:#212121;letter-spacing:-0.680px;-webkit-text-stroke:0.160px;">-</div>
<div class="b " style="left:1282.7px;top:752.5px;width:14.7px;height:14.7px;background:#fff;border-radius:50%;border:1.100px solid #dcdcdc;box-sizing:border-box;"></div>
<div class="t " style="left:1304.8px;top:747px;font-size:12px;line-height:26px;color:#212121;letter-spacing:-0.680px;-webkit-text-stroke:0.160px;">-</div>
<div class="b " style="left:1383.7px;top:752.5px;width:14.7px;height:14.7px;background:#fff;border-radius:50%;border:1.100px solid #dcdcdc;box-sizing:border-box;"></div>
<div class="t " style="left:1405.8px;top:747px;font-size:12px;line-height:26px;color:#212121;letter-spacing:-0.680px;-webkit-text-stroke:0.160px;">-</div>
<div class="b " style="left:1484.7px;top:752.5px;width:14.7px;height:14.7px;background:#fff;border-radius:50%;border:1.100px solid #dcdcdc;box-sizing:border-box;"></div>
<div class="t " style="left:1506.8px;top:747px;font-size:12px;line-height:26px;color:#212121;letter-spacing:-0.680px;-webkit-text-stroke:0.160px;">-</div>
<div class="b " style="left:1585.7px;top:752.5px;width:14.7px;height:14.7px;background:#fff;border-radius:50%;border:1.100px solid #dcdcdc;box-sizing:border-box;"></div>
<div class="t " style="left:1607.8px;top:747px;font-size:12px;line-height:26px;color:#212121;letter-spacing:-0.680px;-webkit-text-stroke:0.160px;">-</div>
<div class="b " style="left:0px;top:773px;width:1681px;height:1px;background:#e0e0e0;"></div>
<svg class="i" style="left:42px;top:778.2px;" width="18" height="18" viewBox="0 0 24 24"><path fill="#616161" d="M10 6L8.59 7.41 13.17 12l-4.58 4.59L10 18l6-6z"/></svg>
<div class="t " style="left:68.3px;top:774px;font-size:12px;line-height:26px;color:#212121;letter-spacing:-0.116px;-webkit-text-stroke:0.160px;">R. Rodriguez</div>
<div class="t " style="left:152.3px;top:774px;font-size:12px;line-height:26px;color:#212121;letter-spacing:0.038px;-webkit-text-stroke:0.160px;">A. Landell</div>
<div class="t " style="left:236.8px;top:774px;font-size:12px;line-height:26px;color:#212121;letter-spacing:0.181px;-webkit-text-stroke:0.160px;">M. Harlow</div>
<div class="t " style="left:321.2px;top:774px;font-size:12px;line-height:26px;color:#212121;letter-spacing:0.082px;-webkit-text-stroke:0.160px;">Jul 12, 2026</div>
<div class="b " style="left:407.4px;top:780.2px;width:13.6px;height:13.6px;background:#4859f8;"></div>
<div class="t " style="left:429.7px;top:774px;font-size:12px;line-height:26px;color:#212121;letter-spacing:0.120px;-webkit-text-stroke:0.160px;">Training</div>
<div class="t " style="left:490px;top:774px;font-size:12px;line-height:26px;color:#212121;letter-spacing:0.190px;-webkit-text-stroke:0.160px;">1</div>
<div class="b " style="left:575.1px;top:779.1px;width:15.8px;height:15.8px;background:#4caf50;border-radius:50%;"></div>
<div class="t " style="left:598.6px;top:774px;font-size:12px;line-height:26px;color:#212121;letter-spacing:0.220px;-webkit-text-stroke:0.160px;">12 Jul</div>
<div class="b " style="left:676.1px;top:779.1px;width:15.8px;height:15.8px;background:#f44336;border-radius:50%;"></div>
<div class="t " style="left:699.6px;top:774px;font-size:12px;line-height:26px;color:#212121;letter-spacing:0.220px;-webkit-text-stroke:0.160px;">15 Jul</div>
<div class="b " style="left:777.1px;top:779.1px;width:15.8px;height:15.8px;background:#4caf50;border-radius:50%;"></div>
<div class="t " style="left:800.6px;top:774px;font-size:12px;line-height:26px;color:#212121;letter-spacing:0.220px;-webkit-text-stroke:0.160px;">15 Jul</div>
<div class="b " style="left:878.1px;top:779.1px;width:15.8px;height:15.8px;background:#03a9f4;border-radius:50%;"></div>
<div class="t " style="left:901.6px;top:774px;font-size:12px;line-height:26px;color:#212121;letter-spacing:0.220px;-webkit-text-stroke:0.160px;">16 Jul</div>
<div class="b " style="left:979.7px;top:779.5px;width:14.7px;height:14.7px;background:#fff;border-radius:50%;border:1.100px solid #dcdcdc;box-sizing:border-box;"></div>
<div class="t " style="left:1001.8px;top:774px;font-size:12px;line-height:26px;color:#212121;letter-spacing:-0.680px;-webkit-text-stroke:0.160px;">-</div>
<div class="b " style="left:1080.7px;top:779.5px;width:14.7px;height:14.7px;background:#fff;border-radius:50%;border:1.100px solid #dcdcdc;box-sizing:border-box;"></div>
<div class="t " style="left:1102.8px;top:774px;font-size:12px;line-height:26px;color:#212121;letter-spacing:-0.680px;-webkit-text-stroke:0.160px;">-</div>
<div class="b " style="left:1181.7px;top:779.5px;width:14.7px;height:14.7px;background:#fff;border-radius:50%;border:1.100px solid #dcdcdc;box-sizing:border-box;"></div>
<div class="t " style="left:1203.8px;top:774px;font-size:12px;line-height:26px;color:#212121;letter-spacing:-0.680px;-webkit-text-stroke:0.160px;">-</div>
<div class="b " style="left:1282.7px;top:779.5px;width:14.7px;height:14.7px;background:#fff;border-radius:50%;border:1.100px solid #dcdcdc;box-sizing:border-box;"></div>
<div class="t " style="left:1304.8px;top:774px;font-size:12px;line-height:26px;color:#212121;letter-spacing:-0.680px;-webkit-text-stroke:0.160px;">-</div>
<div class="b " style="left:1383.7px;top:779.5px;width:14.7px;height:14.7px;background:#fff;border-radius:50%;border:1.100px solid #dcdcdc;box-sizing:border-box;"></div>
<div class="t " style="left:1405.8px;top:774px;font-size:12px;line-height:26px;color:#212121;letter-spacing:-0.680px;-webkit-text-stroke:0.160px;">-</div>
<div class="b " style="left:1484.7px;top:779.5px;width:14.7px;height:14.7px;background:#fff;border-radius:50%;border:1.100px solid #dcdcdc;box-sizing:border-box;"></div>
<div class="t " style="left:1506.8px;top:774px;font-size:12px;line-height:26px;color:#212121;letter-spacing:-0.680px;-webkit-text-stroke:0.160px;">-</div>
<div class="b " style="left:1585.7px;top:779.5px;width:14.7px;height:14.7px;background:#fff;border-radius:50%;border:1.100px solid #dcdcdc;box-sizing:border-box;"></div>
<div class="t " style="left:1607.8px;top:774px;font-size:12px;line-height:26px;color:#212121;letter-spacing:-0.680px;-webkit-text-stroke:0.160px;">-</div>
<div class="b " style="left:0px;top:800px;width:1681px;height:1px;background:#e0e0e0;"></div>
<svg class="i" style="left:42px;top:805.2px;" width="18" height="18" viewBox="0 0 24 24"><path fill="#616161" d="M10 6L8.59 7.41 13.17 12l-4.58 4.59L10 18l6-6z"/></svg>
<div class="t " style="left:68.3px;top:801px;font-size:12px;line-height:26px;color:#212121;letter-spacing:0.160px;-webkit-text-stroke:0.160px;">A. Martinez</div>
<div class="t " style="left:152.3px;top:801px;font-size:12px;line-height:26px;color:#212121;letter-spacing:0.088px;-webkit-text-stroke:0.160px;">J. Falcon</div>
<div class="t " style="left:236.8px;top:801px;font-size:12px;line-height:26px;color:#212121;letter-spacing:0.181px;-webkit-text-stroke:0.160px;">M. Harlow</div>
<div class="t " style="left:321.2px;top:801px;font-size:12px;line-height:26px;color:#212121;letter-spacing:0.082px;-webkit-text-stroke:0.160px;">Jul 12, 2026</div>
<div class="b " style="left:407.4px;top:807.2px;width:13.6px;height:13.6px;background:#4859f8;"></div>
<div class="t " style="left:429.7px;top:801px;font-size:12px;line-height:26px;color:#212121;letter-spacing:0.120px;-webkit-text-stroke:0.160px;">Training</div>
<div class="t " style="left:490px;top:801px;font-size:12px;line-height:26px;color:#212121;letter-spacing:0.190px;-webkit-text-stroke:0.160px;">1</div>
<div class="b " style="left:575.1px;top:806.1px;width:15.8px;height:15.8px;background:#4caf50;border-radius:50%;"></div>
<div class="t " style="left:598.6px;top:801px;font-size:12px;line-height:26px;color:#212121;letter-spacing:0.220px;-webkit-text-stroke:0.160px;">15 Jul</div>
<div class="b " style="left:676.1px;top:806.1px;width:15.8px;height:15.8px;background:#4caf50;border-radius:50%;"></div>
<div class="t " style="left:699.6px;top:801px;font-size:12px;line-height:26px;color:#212121;letter-spacing:0.220px;-webkit-text-stroke:0.160px;">15 Jul</div>
<div class="b " style="left:777.1px;top:806.1px;width:15.8px;height:15.8px;background:#f44336;border-radius:50%;"></div>
<div class="t " style="left:800.6px;top:801px;font-size:12px;line-height:26px;color:#212121;letter-spacing:0.220px;-webkit-text-stroke:0.160px;">14 Jul</div>
<div class="b " style="left:878.1px;top:806.1px;width:15.8px;height:15.8px;background:#4caf50;border-radius:50%;"></div>
<div class="t " style="left:901.6px;top:801px;font-size:12px;line-height:26px;color:#212121;letter-spacing:0.220px;-webkit-text-stroke:0.160px;">18 Jul</div>
<div class="b " style="left:979.1px;top:806.1px;width:15.8px;height:15.8px;background:#03a9f4;border-radius:50%;"></div>
<div class="t " style="left:1002.6px;top:801px;font-size:12px;line-height:26px;color:#212121;letter-spacing:0.220px;-webkit-text-stroke:0.160px;">18 Jul</div>
<div class="b " style="left:1080.7px;top:806.5px;width:14.7px;height:14.7px;background:#fff;border-radius:50%;border:1.100px solid #dcdcdc;box-sizing:border-box;"></div>
<div class="t " style="left:1102.8px;top:801px;font-size:12px;line-height:26px;color:#212121;letter-spacing:-0.680px;-webkit-text-stroke:0.160px;">-</div>
<div class="b " style="left:1181.7px;top:806.5px;width:14.7px;height:14.7px;background:#fff;border-radius:50%;border:1.100px solid #dcdcdc;box-sizing:border-box;"></div>
<div class="t " style="left:1203.8px;top:801px;font-size:12px;line-height:26px;color:#212121;letter-spacing:-0.680px;-webkit-text-stroke:0.160px;">-</div>
<div class="b " style="left:1282.7px;top:806.5px;width:14.7px;height:14.7px;background:#fff;border-radius:50%;border:1.100px solid #dcdcdc;box-sizing:border-box;"></div>
<div class="t " style="left:1304.8px;top:801px;font-size:12px;line-height:26px;color:#212121;letter-spacing:-0.680px;-webkit-text-stroke:0.160px;">-</div>
<div class="b " style="left:1383.7px;top:806.5px;width:14.7px;height:14.7px;background:#fff;border-radius:50%;border:1.100px solid #dcdcdc;box-sizing:border-box;"></div>
<div class="t " style="left:1405.8px;top:801px;font-size:12px;line-height:26px;color:#212121;letter-spacing:-0.680px;-webkit-text-stroke:0.160px;">-</div>
<div class="b " style="left:1484.7px;top:806.5px;width:14.7px;height:14.7px;background:#fff;border-radius:50%;border:1.100px solid #dcdcdc;box-sizing:border-box;"></div>
<div class="t " style="left:1506.8px;top:801px;font-size:12px;line-height:26px;color:#212121;letter-spacing:-0.680px;-webkit-text-stroke:0.160px;">-</div>
<div class="b " style="left:1585.7px;top:806.5px;width:14.7px;height:14.7px;background:#fff;border-radius:50%;border:1.100px solid #dcdcdc;box-sizing:border-box;"></div>
<div class="t " style="left:1607.8px;top:801px;font-size:12px;line-height:26px;color:#212121;letter-spacing:-0.680px;-webkit-text-stroke:0.160px;">-</div>
<div class="b " style="left:0px;top:827px;width:1681px;height:1px;background:#e0e0e0;"></div>
<svg class="i" style="left:42px;top:832.2px;" width="18" height="18" viewBox="0 0 24 24"><path fill="#616161" d="M10 6L8.59 7.41 13.17 12l-4.58 4.59L10 18l6-6z"/></svg>
<div class="t " style="left:68.3px;top:828px;font-size:12px;line-height:26px;color:#212121;letter-spacing:0.009px;-webkit-text-stroke:0.160px;">K. Ande</div>
<div class="t " style="left:110.697px;top:829.3px;font-size:8.3px;line-height:26px;color:#212121;letter-spacing:-0.900px;-webkit-text-stroke:0.160px;">…</div>
<svg class="i" style="left:126.2px;top:832px;" width="18" height="18" viewBox="0 0 24 24"><path fill="#03a9f4" d="M6 2c-1.1 0-1.99.9-1.99 2L4 20c0 1.1.89 2 1.99 2H18c1.1 0 2-.9 2-2V8l-6-6H6zm7 7V3.5L18.500 9H13z"/></svg>
<div class="t " style="left:152.3px;top:828px;font-size:12px;line-height:26px;color:#212121;letter-spacing:0.088px;-webkit-text-stroke:0.160px;">J. Falcon</div>
<div class="t " style="left:236.8px;top:828px;font-size:12px;line-height:26px;color:#212121;letter-spacing:0.181px;-webkit-text-stroke:0.160px;">M. Harlow</div>
<div class="t " style="left:321.2px;top:828px;font-size:12px;line-height:26px;color:#212121;letter-spacing:0.157px;-webkit-text-stroke:0.160px;">Jul 11, 2026</div>
<div class="b " style="left:407.4px;top:834.2px;width:13.6px;height:13.6px;background:#4859f8;"></div>
<div class="t " style="left:429.7px;top:828px;font-size:12px;line-height:26px;color:#212121;letter-spacing:0.120px;-webkit-text-stroke:0.160px;">Training</div>
<div class="t " style="left:490px;top:828px;font-size:12px;line-height:26px;color:#212121;letter-spacing:0.190px;-webkit-text-stroke:0.160px;">1</div>
<div class="b " style="left:575.1px;top:833.1px;width:15.8px;height:15.8px;background:#4caf50;border-radius:50%;"></div>
<div class="t " style="left:598.6px;top:828px;font-size:12px;line-height:26px;color:#212121;letter-spacing:0.220px;-webkit-text-stroke:0.160px;">14 Jul</div>
<div class="b " style="left:676.1px;top:833.1px;width:15.8px;height:15.8px;background:#4caf50;border-radius:50%;"></div>
<div class="t " style="left:699.6px;top:828px;font-size:12px;line-height:26px;color:#212121;letter-spacing:0.220px;-webkit-text-stroke:0.160px;">14 Jul</div>
<div class="b " style="left:777.1px;top:833.1px;width:15.8px;height:15.8px;background:#4caf50;border-radius:50%;"></div>
<div class="t " style="left:800.6px;top:828px;font-size:12px;line-height:26px;color:#212121;letter-spacing:0.220px;-webkit-text-stroke:0.160px;">13 Jul</div>
<div class="b " style="left:878.1px;top:833.1px;width:15.8px;height:15.8px;background:#ffb74d;border-radius:50%;"></div>
<div class="t " style="left:901.6px;top:828px;font-size:12px;line-height:26px;color:#212121;letter-spacing:0.220px;-webkit-text-stroke:0.160px;">15 Jul</div>
<div class="b " style="left:979.1px;top:833.1px;width:15.8px;height:15.8px;background:#03a9f4;border-radius:50%;"></div>
<div class="t " style="left:1002.6px;top:828px;font-size:12px;line-height:26px;color:#212121;letter-spacing:0.220px;-webkit-text-stroke:0.160px;">17 Jul</div>
<div class="b " style="left:1080.7px;top:833.5px;width:14.7px;height:14.7px;background:#fff;border-radius:50%;border:1.100px solid #dcdcdc;box-sizing:border-box;"></div>
<div class="t " style="left:1102.8px;top:828px;font-size:12px;line-height:26px;color:#212121;letter-spacing:-0.680px;-webkit-text-stroke:0.160px;">-</div>
<div class="b " style="left:1181.7px;top:833.5px;width:14.7px;height:14.7px;background:#fff;border-radius:50%;border:1.100px solid #dcdcdc;box-sizing:border-box;"></div>
<div class="t " style="left:1203.8px;top:828px;font-size:12px;line-height:26px;color:#212121;letter-spacing:-0.680px;-webkit-text-stroke:0.160px;">-</div>
<div class="b " style="left:1282.7px;top:833.5px;width:14.7px;height:14.7px;background:#fff;border-radius:50%;border:1.100px solid #dcdcdc;box-sizing:border-box;"></div>
<div class="t " style="left:1304.8px;top:828px;font-size:12px;line-height:26px;color:#212121;letter-spacing:-0.680px;-webkit-text-stroke:0.160px;">-</div>
<div class="b " style="left:1383.7px;top:833.5px;width:14.7px;height:14.7px;background:#fff;border-radius:50%;border:1.100px solid #dcdcdc;box-sizing:border-box;"></div>
<div class="t " style="left:1405.8px;top:828px;font-size:12px;line-height:26px;color:#212121;letter-spacing:-0.680px;-webkit-text-stroke:0.160px;">-</div>
<div class="b " style="left:1484.7px;top:833.5px;width:14.7px;height:14.7px;background:#fff;border-radius:50%;border:1.100px solid #dcdcdc;box-sizing:border-box;"></div>
<div class="t " style="left:1506.8px;top:828px;font-size:12px;line-height:26px;color:#212121;letter-spacing:-0.680px;-webkit-text-stroke:0.160px;">-</div>
<div class="b " style="left:1585.7px;top:833.5px;width:14.7px;height:14.7px;background:#fff;border-radius:50%;border:1.100px solid #dcdcdc;box-sizing:border-box;"></div>
<div class="t " style="left:1607.8px;top:828px;font-size:12px;line-height:26px;color:#212121;letter-spacing:-0.680px;-webkit-text-stroke:0.160px;">-</div>
<div class="b " style="left:0px;top:854px;width:1681px;height:1px;background:#e0e0e0;"></div>
<svg class="i" style="left:42px;top:859.2px;" width="18" height="18" viewBox="0 0 24 24"><path fill="#616161" d="M10 6L8.59 7.41 13.17 12l-4.58 4.59L10 18l6-6z"/></svg>
<div class="t " style="left:68.3px;top:855px;font-size:12px;line-height:26px;color:#212121;letter-spacing:0.198px;-webkit-text-stroke:0.160px;">M. Williams</div>
<div class="t " style="left:152.3px;top:855px;font-size:12px;line-height:26px;color:#212121;letter-spacing:0.088px;-webkit-text-stroke:0.160px;">J. Falcon</div>
<div class="t " style="left:236.8px;top:855px;font-size:12px;line-height:26px;color:#212121;letter-spacing:0.038px;-webkit-text-stroke:0.160px;">A. Landell</div>
<div class="t " style="left:321.2px;top:855px;font-size:12px;line-height:26px;color:#212121;letter-spacing:0.082px;-webkit-text-stroke:0.160px;">Jul 12, 2026</div>
<div class="b " style="left:407.4px;top:861.2px;width:13.6px;height:13.6px;background:#4859f8;"></div>
<div class="t " style="left:429.7px;top:855px;font-size:12px;line-height:26px;color:#212121;letter-spacing:0.120px;-webkit-text-stroke:0.160px;">Training</div>
<div class="t " style="left:490px;top:855px;font-size:12px;line-height:26px;color:#212121;letter-spacing:0.190px;-webkit-text-stroke:0.160px;">1</div>
<div class="b " style="left:575.1px;top:860.1px;width:15.8px;height:15.8px;background:#4caf50;border-radius:50%;"></div>
<div class="t " style="left:598.6px;top:855px;font-size:12px;line-height:26px;color:#212121;letter-spacing:0.220px;-webkit-text-stroke:0.160px;">13 Jul</div>
<div class="b " style="left:676.1px;top:860.1px;width:15.8px;height:15.8px;background:#4caf50;border-radius:50%;"></div>
<div class="t " style="left:699.6px;top:855px;font-size:12px;line-height:26px;color:#212121;letter-spacing:0.220px;-webkit-text-stroke:0.160px;">13 Jul</div>
<div class="b " style="left:777.1px;top:860.1px;width:15.8px;height:15.8px;background:#4caf50;border-radius:50%;"></div>
<div class="t " style="left:800.6px;top:855px;font-size:12px;line-height:26px;color:#212121;letter-spacing:0.220px;-webkit-text-stroke:0.160px;">16 Jul</div>
<div class="b " style="left:878.1px;top:860.1px;width:15.8px;height:15.8px;background:#03a9f4;border-radius:50%;"></div>
<div class="t " style="left:901.6px;top:855px;font-size:12px;line-height:26px;color:#212121;letter-spacing:0.220px;-webkit-text-stroke:0.160px;">17 Jul</div>
<div class="b " style="left:979.7px;top:860.5px;width:14.7px;height:14.7px;background:#fff;border-radius:50%;border:1.100px solid #dcdcdc;box-sizing:border-box;"></div>
<div class="t " style="left:1001.8px;top:855px;font-size:12px;line-height:26px;color:#212121;letter-spacing:-0.680px;-webkit-text-stroke:0.160px;">-</div>
<div class="b " style="left:1080.7px;top:860.5px;width:14.7px;height:14.7px;background:#fff;border-radius:50%;border:1.100px solid #dcdcdc;box-sizing:border-box;"></div>
<div class="t " style="left:1102.8px;top:855px;font-size:12px;line-height:26px;color:#212121;letter-spacing:-0.680px;-webkit-text-stroke:0.160px;">-</div>
<div class="b " style="left:1181.7px;top:860.5px;width:14.7px;height:14.7px;background:#fff;border-radius:50%;border:1.100px solid #dcdcdc;box-sizing:border-box;"></div>
<div class="t " style="left:1203.8px;top:855px;font-size:12px;line-height:26px;color:#212121;letter-spacing:-0.680px;-webkit-text-stroke:0.160px;">-</div>
<div class="b " style="left:1282.7px;top:860.5px;width:14.7px;height:14.7px;background:#fff;border-radius:50%;border:1.100px solid #dcdcdc;box-sizing:border-box;"></div>
<div class="t " style="left:1304.8px;top:855px;font-size:12px;line-height:26px;color:#212121;letter-spacing:-0.680px;-webkit-text-stroke:0.160px;">-</div>
<div class="b " style="left:1383.7px;top:860.5px;width:14.7px;height:14.7px;background:#fff;border-radius:50%;border:1.100px solid #dcdcdc;box-sizing:border-box;"></div>
<div class="t " style="left:1405.8px;top:855px;font-size:12px;line-height:26px;color:#212121;letter-spacing:-0.680px;-webkit-text-stroke:0.160px;">-</div>
<div class="b " style="left:1484.7px;top:860.5px;width:14.7px;height:14.7px;background:#fff;border-radius:50%;border:1.100px solid #dcdcdc;box-sizing:border-box;"></div>
<div class="t " style="left:1506.8px;top:855px;font-size:12px;line-height:26px;color:#212121;letter-spacing:-0.680px;-webkit-text-stroke:0.160px;">-</div>
<div class="b " style="left:1585.7px;top:860.5px;width:14.7px;height:14.7px;background:#fff;border-radius:50%;border:1.100px solid #dcdcdc;box-sizing:border-box;"></div>
<div class="t " style="left:1607.8px;top:855px;font-size:12px;line-height:26px;color:#212121;letter-spacing:-0.680px;-webkit-text-stroke:0.160px;">-</div>
<div class="b " style="left:0px;top:881px;width:1681px;height:1px;background:#e0e0e0;"></div>
<div class="b " style="left:0px;top:638px;width:1681px;height:1px;background:#e0e0e0;"></div>
<div class="t " style="left:-35px;width:600px;text-align:right;top:448px;font-size:12px;line-height:26px;color:#616161;letter-spacing:0.264px;-webkit-text-stroke:0.160px;margin-left:0.264px;">Instructor:</div>
<div class="t " style="left:-35px;width:600px;text-align:right;top:474px;font-size:12px;line-height:26px;color:#616161;letter-spacing:0.236px;-webkit-text-stroke:0.160px;margin-left:0.236px;">Formation position:</div>
<div class="t " style="left:-35px;width:600px;text-align:right;top:500px;font-size:12px;line-height:26px;color:#616161;letter-spacing:0.228px;-webkit-text-stroke:0.160px;margin-left:0.228px;">Workflows:</div>
<div class="t " style="left:-35px;width:600px;text-align:right;top:526px;font-size:12px;line-height:26px;color:#616161;letter-spacing:0.108px;-webkit-text-stroke:0.160px;margin-left:0.108px;">Content:</div>
<div class="t " style="left:-35px;width:600px;text-align:right;top:552px;font-size:12px;line-height:26px;color:#616161;letter-spacing:0.185px;-webkit-text-stroke:0.160px;margin-left:0.185px;">Training outcome:</div>
<div class="t " style="left:-35px;width:600px;text-align:right;top:578px;font-size:12px;line-height:26px;color:#616161;letter-spacing:-0.051px;-webkit-text-stroke:0.160px;margin-left:-0.051px;">Score:</div>
<div class="t " style="left:-35px;width:600px;text-align:right;top:604px;font-size:12px;line-height:26px;color:#212121;letter-spacing:0.003px;-webkit-text-stroke:0.160px;margin-left:0.003px;">Result:</div>
<div class="b " style="left:0px;top:603px;width:1680px;height:1px;background:repeating-linear-gradient(90deg,#cfcfcf 0 2px,transparent 2px 4px);"></div>
<div class="b " style="left:569px;top:603px;width:1px;height:1px;background:#e0e0e0;"></div>
<div class="b " style="left:670px;top:603px;width:1px;height:1px;background:#e0e0e0;"></div>
<div class="b " style="left:771px;top:603px;width:1px;height:1px;background:#e0e0e0;"></div>
<div class="b " style="left:872px;top:603px;width:1px;height:1px;background:#e0e0e0;"></div>
<div class="b " style="left:973px;top:603px;width:1px;height:1px;background:#e0e0e0;"></div>
<div class="b " style="left:1074px;top:603px;width:1px;height:1px;background:#e0e0e0;"></div>
<div class="b " style="left:1175px;top:603px;width:1px;height:1px;background:#e0e0e0;"></div>
<div class="b " style="left:1276px;top:603px;width:1px;height:1px;background:#e0e0e0;"></div>
<div class="b " style="left:1377px;top:603px;width:1px;height:1px;background:#e0e0e0;"></div>
<div class="b " style="left:1478px;top:603px;width:1px;height:1px;background:#e0e0e0;"></div>
<div class="b " style="left:1579px;top:603px;width:1px;height:1px;background:#e0e0e0;"></div>
<div class="b " style="left:1680px;top:603px;width:1px;height:1px;background:#e0e0e0;"></div>
<div class="t " style="left:574.5px;top:448px;font-size:12px;line-height:26px;color:#757575;letter-spacing:0.345px;-webkit-text-stroke:0.160px;">J.falcon</div>
<div class="t " style="left:574.5px;top:474px;font-size:12px;line-height:26px;color:#757575;letter-spacing:0.405px;-webkit-text-stroke:0.160px;">1st</div>
<div class="b " style="left:574px;top:509px;width:8px;height:8px;background:#4caf50;border-radius:50%;"></div>
<div class="t " style="left:584.5px;top:500px;font-size:12px;line-height:26px;color:#616161;letter-spacing:0.190px;-webkit-text-stroke:0.160px;">2</div>
<div class="b " style="left:574px;top:535px;width:8px;height:8px;background:#4caf50;border-radius:50%;"></div>
<div class="t " style="left:584.5px;top:526px;font-size:12px;line-height:26px;color:#616161;letter-spacing:0.190px;-webkit-text-stroke:0.160px;">4</div>
<div class="t " style="left:574.8px;top:552px;font-size:12px;line-height:26px;color:#616161;letter-spacing:-0.736px;-webkit-text-stroke:0.160px;">C</div>
<div class="t " style="left:588.4px;top:554.3px;font-size:10px;line-height:26px;color:#757575;letter-spacing:0.265px;-webkit-text-stroke:0.160px;">Duty carried out</div>
<div class="b " style="left:574px;top:587px;width:8px;height:8px;background:#4caf50;border-radius:50%;"></div>
<div class="t " style="left:584.5px;top:578px;font-size:12px;line-height:26px;color:#616161;letter-spacing:-0.407px;-webkit-text-stroke:0.160px;">C+</div>
<div class="t " style="left:574.5px;top:604px;font-size:12px;line-height:26px;color:#388e3c;letter-spacing:-0.285px;font-weight:bold;">Passed</div>
<div class="t " style="left:675.5px;top:448px;font-size:12px;line-height:26px;color:#757575;letter-spacing:0.345px;-webkit-text-stroke:0.160px;">J.falcon</div>
<div class="t " style="left:675.5px;top:474px;font-size:12px;line-height:26px;color:#757575;letter-spacing:0.159px;-webkit-text-stroke:0.160px;">2nd</div>
<div class="b " style="left:675px;top:509px;width:8px;height:8px;background:#4caf50;border-radius:50%;"></div>
<div class="t " style="left:685.5px;top:500px;font-size:12px;line-height:26px;color:#616161;letter-spacing:0.190px;-webkit-text-stroke:0.160px;">2</div>
<div class="b " style="left:675px;top:535px;width:8px;height:8px;background:#4caf50;border-radius:50%;"></div>
<div class="t " style="left:685.5px;top:526px;font-size:12px;line-height:26px;color:#616161;letter-spacing:0.190px;-webkit-text-stroke:0.160px;">2</div>
<div class="t " style="left:675.8px;top:552px;font-size:12px;line-height:26px;color:#616161;letter-spacing:-0.736px;-webkit-text-stroke:0.160px;">C</div>
<div class="t " style="left:689.4px;top:554.3px;font-size:10px;line-height:26px;color:#757575;letter-spacing:0.265px;-webkit-text-stroke:0.160px;">Duty carried out</div>
<div class="b " style="left:675px;top:587px;width:8px;height:8px;background:#4caf50;border-radius:50%;"></div>
<div class="t " style="left:685.5px;top:578px;font-size:12px;line-height:26px;color:#616161;letter-spacing:-0.407px;-webkit-text-stroke:0.160px;">C+</div>
<div class="t " style="left:675.5px;top:604px;font-size:12px;line-height:26px;color:#388e3c;letter-spacing:-0.285px;font-weight:bold;">Passed</div>
<div class="t " style="left:776.5px;top:448px;font-size:12px;line-height:26px;color:#757575;letter-spacing:0.345px;-webkit-text-stroke:0.160px;">J.falcon</div>
<div class="t " style="left:776.5px;top:474px;font-size:12px;line-height:26px;color:#757575;letter-spacing:-0.560px;-webkit-text-stroke:0.160px;">-</div>
<div class="b " style="left:776px;top:509px;width:8px;height:8px;background:#4caf50;border-radius:50%;"></div>
<div class="t " style="left:786.5px;top:500px;font-size:12px;line-height:26px;color:#616161;letter-spacing:0.190px;-webkit-text-stroke:0.160px;">3</div>
<div class="b " style="left:808px;top:509px;width:8px;height:8px;background:#ffb74d;border-radius:50%;"></div>
<div class="t " style="left:818.5px;top:500px;font-size:12px;line-height:26px;color:#616161;letter-spacing:0.190px;-webkit-text-stroke:0.160px;">1</div>
<div class="b " style="left:840px;top:509px;width:8px;height:8px;border-radius:50%;border:1.300px solid #212121;box-sizing:border-box;"></div>
<div class="t " style="left:850.5px;top:500px;font-size:12px;line-height:26px;color:#616161;letter-spacing:0.190px;-webkit-text-stroke:0.160px;">1</div>
<div class="b " style="left:776px;top:535px;width:8px;height:8px;background:#4caf50;border-radius:50%;"></div>
<div class="t " style="left:786.5px;top:526px;font-size:12px;line-height:26px;color:#616161;letter-spacing:0.190px;-webkit-text-stroke:0.160px;">1</div>
<div class="b " style="left:808px;top:535px;width:8px;height:8px;background:#ffb74d;border-radius:50%;"></div>
<div class="t " style="left:818.5px;top:526px;font-size:12px;line-height:26px;color:#616161;letter-spacing:0.190px;-webkit-text-stroke:0.160px;">2</div>
<div class="b " style="left:840px;top:535px;width:8px;height:8px;border-radius:50%;border:1.300px solid #212121;box-sizing:border-box;"></div>
<div class="t " style="left:850.5px;top:526px;font-size:12px;line-height:26px;color:#616161;letter-spacing:0.190px;-webkit-text-stroke:0.160px;">1</div>
<div class="t " style="left:776.8px;top:552px;font-size:12px;line-height:26px;color:#616161;letter-spacing:-0.765px;-webkit-text-stroke:0.160px;">U</div>
<div class="t " style="left:790.4px;top:554.3px;font-size:10px;line-height:26px;color:#757575;letter-spacing:0.230px;-webkit-text-stroke:0.160px;">Unknown</div>
<div class="b " style="left:776px;top:587px;width:8px;height:8px;background:#f44336;border-radius:50%;"></div>
<div class="t " style="left:786.5px;top:578px;font-size:12px;line-height:26px;color:#616161;letter-spacing:-0.361px;-webkit-text-stroke:0.160px;">NC</div>
<div class="t " style="left:776.5px;top:604px;font-size:12px;line-height:26px;color:#c62828;letter-spacing:-0.274px;font-weight:bold;">Failed</div>
<div class="t " style="left:877.5px;top:448px;font-size:12px;line-height:26px;color:#757575;letter-spacing:0.345px;-webkit-text-stroke:0.160px;">J.falcon</div>
<div class="t " style="left:877.5px;top:474px;font-size:12px;line-height:26px;color:#757575;letter-spacing:0.405px;-webkit-text-stroke:0.160px;">1st</div>
<div class="b " style="left:877px;top:509px;width:8px;height:8px;background:#ffb74d;border-radius:50%;"></div>
<div class="t " style="left:887.5px;top:500px;font-size:12px;line-height:26px;color:#616161;letter-spacing:0.190px;-webkit-text-stroke:0.160px;">5</div>
<div class="b " style="left:909px;top:509px;width:8px;height:8px;border-radius:50%;border:1.300px solid #212121;box-sizing:border-box;"></div>
<div class="t " style="left:919.5px;top:500px;font-size:12px;line-height:26px;color:#616161;letter-spacing:0.190px;-webkit-text-stroke:0.160px;">1</div>
<div class="b " style="left:877px;top:535px;width:8px;height:8px;background:#ffb74d;border-radius:50%;"></div>
<div class="t " style="left:887.5px;top:526px;font-size:12px;line-height:26px;color:#616161;letter-spacing:0.190px;-webkit-text-stroke:0.160px;">5</div>
<div class="b " style="left:909px;top:535px;width:8px;height:8px;border-radius:50%;border:1.300px solid #212121;box-sizing:border-box;"></div>
<div class="t " style="left:919.5px;top:526px;font-size:12px;line-height:26px;color:#616161;letter-spacing:0.190px;-webkit-text-stroke:0.160px;">1</div>
<div class="t " style="left:877.8px;top:552px;font-size:12px;line-height:26px;color:#616161;letter-spacing:-0.314px;-webkit-text-stroke:0.160px;">P</div>
<div class="t " style="left:891.4px;top:554.3px;font-size:10px;line-height:26px;color:#757575;letter-spacing:0.293px;-webkit-text-stroke:0.160px;">Duty partially</div>
<div class="t " style="left:953.507px;top:555.4px;font-size:7px;line-height:26px;color:#757575;letter-spacing:-0.800px;-webkit-text-stroke:0.160px;">…</div>
<div class="b " style="left:877px;top:587px;width:8px;height:8px;background:#ffb74d;border-radius:50%;"></div>
<div class="t " style="left:887.5px;top:578px;font-size:12px;line-height:26px;color:#616161;letter-spacing:-0.361px;-webkit-text-stroke:0.160px;">NC</div>
<div class="t " style="left:877.5px;top:604px;font-size:12px;line-height:26px;color:#212121;letter-spacing:0.762px;font-weight:bold;">-</div>
<div class="t " style="left:978.5px;top:448px;font-size:12px;line-height:26px;color:#757575;letter-spacing:0.345px;-webkit-text-stroke:0.160px;">J.falcon</div>
<div class="t " style="left:978.5px;top:474px;font-size:12px;line-height:26px;color:#757575;letter-spacing:0.159px;-webkit-text-stroke:0.160px;">2nd</div>
<div class="b " style="left:978px;top:509px;width:8px;height:8px;background:#4caf50;border-radius:50%;"></div>
<div class="t " style="left:988.5px;top:500px;font-size:12px;line-height:26px;color:#616161;letter-spacing:0.190px;-webkit-text-stroke:0.160px;">1</div>
<div class="b " style="left:1010px;top:509px;width:8px;height:8px;background:#ffb74d;border-radius:50%;"></div>
<div class="t " style="left:1020.5px;top:500px;font-size:12px;line-height:26px;color:#616161;letter-spacing:0.190px;-webkit-text-stroke:0.160px;">5</div>
<div class="b " style="left:978px;top:535px;width:8px;height:8px;background:#4caf50;border-radius:50%;"></div>
<div class="t " style="left:988.5px;top:526px;font-size:12px;line-height:26px;color:#616161;letter-spacing:0.190px;-webkit-text-stroke:0.160px;">1</div>
<div class="b " style="left:1010px;top:535px;width:8px;height:8px;background:#ffb74d;border-radius:50%;"></div>
<div class="t " style="left:1020.5px;top:526px;font-size:12px;line-height:26px;color:#616161;letter-spacing:0.190px;-webkit-text-stroke:0.160px;">3</div>
<div class="b " style="left:1042px;top:535px;width:8px;height:8px;border-radius:50%;border:1.300px solid #212121;box-sizing:border-box;"></div>
<div class="t " style="left:1052.5px;top:526px;font-size:12px;line-height:26px;color:#616161;letter-spacing:0.190px;-webkit-text-stroke:0.160px;">1</div>
<div class="t " style="left:978.5px;top:552px;font-size:12px;line-height:26px;color:#757575;letter-spacing:-0.680px;-webkit-text-stroke:0.160px;">-</div>
<div class="t " style="left:978.5px;top:578px;font-size:12px;line-height:26px;color:#757575;letter-spacing:-0.680px;-webkit-text-stroke:0.160px;">-</div>
<div class="t " style="left:978.5px;top:604px;font-size:12px;line-height:26px;color:#388e3c;letter-spacing:0.762px;font-weight:bold;">-</div>
<div class="t " style="left:1079.5px;top:448px;font-size:12px;line-height:26px;color:#212121;letter-spacing:0.181px;-webkit-text-stroke:0.160px;">M. Harlow</div>
<div class="t " style="left:1079.5px;top:474px;font-size:12px;line-height:26px;color:#757575;letter-spacing:0.159px;-webkit-text-stroke:0.160px;">2nd</div>
<div class="b " style="left:1079px;top:509px;width:8px;height:8px;border-radius:50%;border:1.300px solid #212121;box-sizing:border-box;"></div>
<div class="t " style="left:1089.5px;top:500px;font-size:12px;line-height:26px;color:#616161;letter-spacing:0.190px;-webkit-text-stroke:0.160px;">4</div>
<div class="b " style="left:1079px;top:535px;width:8px;height:8px;border-radius:50%;border:1.300px solid #212121;box-sizing:border-box;"></div>
<div class="t " style="left:1089.5px;top:526px;font-size:12px;line-height:26px;color:#616161;letter-spacing:0.190px;-webkit-text-stroke:0.160px;">3</div>
<div class="t " style="left:1079.5px;top:552px;font-size:12px;line-height:26px;color:#757575;letter-spacing:-0.680px;-webkit-text-stroke:0.160px;">-</div>
<div class="t " style="left:1079.5px;top:578px;font-size:12px;line-height:26px;color:#757575;letter-spacing:-0.680px;-webkit-text-stroke:0.160px;">-</div>
<div class="t " style="left:1079.5px;top:604px;font-size:12px;line-height:26px;color:#388e3c;letter-spacing:0.762px;font-weight:bold;">-</div>
<div class="t " style="left:1180.5px;top:448px;font-size:12px;line-height:26px;color:#757575;letter-spacing:0.345px;-webkit-text-stroke:0.160px;">J.falcon</div>
<div class="t " style="left:1180.5px;top:474px;font-size:12px;line-height:26px;color:#757575;letter-spacing:0.405px;-webkit-text-stroke:0.160px;">1st</div>
<div class="b " style="left:1180px;top:509px;width:8px;height:8px;border-radius:50%;border:1.300px solid #212121;box-sizing:border-box;"></div>
<div class="t " style="left:1190.5px;top:500px;font-size:12px;line-height:26px;color:#616161;letter-spacing:0.190px;-webkit-text-stroke:0.160px;">3</div>
<div class="b " style="left:1180px;top:535px;width:8px;height:8px;border-radius:50%;border:1.300px solid #212121;box-sizing:border-box;"></div>
<div class="t " style="left:1190.5px;top:526px;font-size:12px;line-height:26px;color:#616161;letter-spacing:0.190px;-webkit-text-stroke:0.160px;">4</div>
<div class="t " style="left:1180.5px;top:552px;font-size:12px;line-height:26px;color:#757575;letter-spacing:-0.680px;-webkit-text-stroke:0.160px;">-</div>
<div class="t " style="left:1180.5px;top:578px;font-size:12px;line-height:26px;color:#757575;letter-spacing:-0.680px;-webkit-text-stroke:0.160px;">-</div>
<div class="t " style="left:1180.5px;top:604px;font-size:12px;line-height:26px;color:#388e3c;letter-spacing:0.762px;font-weight:bold;">-</div>
<div class="t " style="left:1281.5px;top:448px;font-size:12px;line-height:26px;color:#757575;letter-spacing:0.345px;-webkit-text-stroke:0.160px;">J.falcon</div>
<div class="t " style="left:1281.5px;top:474px;font-size:12px;line-height:26px;color:#757575;letter-spacing:-0.560px;-webkit-text-stroke:0.160px;">-</div>
<div class="b " style="left:1281px;top:509px;width:8px;height:8px;border-radius:50%;border:1.300px solid #212121;box-sizing:border-box;"></div>
<div class="t " style="left:1291.5px;top:500px;font-size:12px;line-height:26px;color:#616161;letter-spacing:0.190px;-webkit-text-stroke:0.160px;">6</div>
<div class="b " style="left:1281px;top:535px;width:8px;height:8px;border-radius:50%;border:1.300px solid #212121;box-sizing:border-box;"></div>
<div class="t " style="left:1291.5px;top:526px;font-size:12px;line-height:26px;color:#616161;letter-spacing:0.190px;-webkit-text-stroke:0.160px;">5</div>
<div class="t " style="left:1281.5px;top:552px;font-size:12px;line-height:26px;color:#757575;letter-spacing:-0.680px;-webkit-text-stroke:0.160px;">-</div>
<div class="t " style="left:1281.5px;top:578px;font-size:12px;line-height:26px;color:#757575;letter-spacing:-0.680px;-webkit-text-stroke:0.160px;">-</div>
<div class="t " style="left:1281.5px;top:604px;font-size:12px;line-height:26px;color:#388e3c;letter-spacing:0.762px;font-weight:bold;">-</div>
<div class="t " style="left:1382.5px;top:448px;font-size:12px;line-height:26px;color:#757575;letter-spacing:0.345px;-webkit-text-stroke:0.160px;">J.falcon</div>
<div class="t " style="left:1382.5px;top:474px;font-size:12px;line-height:26px;color:#757575;letter-spacing:-0.560px;-webkit-text-stroke:0.160px;">-</div>
<div class="b " style="left:1382px;top:509px;width:8px;height:8px;border-radius:50%;border:1.300px solid #212121;box-sizing:border-box;"></div>
<div class="t " style="left:1392.5px;top:500px;font-size:12px;line-height:26px;color:#616161;letter-spacing:0.190px;-webkit-text-stroke:0.160px;">7</div>
<div class="b " style="left:1382px;top:535px;width:8px;height:8px;border-radius:50%;border:1.300px solid #212121;box-sizing:border-box;"></div>
<div class="t " style="left:1392.5px;top:526px;font-size:12px;line-height:26px;color:#616161;letter-spacing:0.190px;-webkit-text-stroke:0.160px;">5</div>
<div class="t " style="left:1382.5px;top:552px;font-size:12px;line-height:26px;color:#757575;letter-spacing:-0.680px;-webkit-text-stroke:0.160px;">-</div>
<div class="t " style="left:1382.5px;top:578px;font-size:12px;line-height:26px;color:#757575;letter-spacing:-0.680px;-webkit-text-stroke:0.160px;">-</div>
<div class="t " style="left:1382.5px;top:604px;font-size:12px;line-height:26px;color:#388e3c;letter-spacing:0.762px;font-weight:bold;">-</div>
<div class="t " style="left:1483.5px;top:448px;font-size:12px;line-height:26px;color:#212121;letter-spacing:0.181px;-webkit-text-stroke:0.160px;">M. Harlow</div>
<div class="t " style="left:1483.5px;top:474px;font-size:12px;line-height:26px;color:#757575;letter-spacing:0.159px;-webkit-text-stroke:0.160px;">2nd</div>
<div class="b " style="left:1483px;top:509px;width:8px;height:8px;border-radius:50%;border:1.300px solid #212121;box-sizing:border-box;"></div>
<div class="t " style="left:1493.5px;top:500px;font-size:12px;line-height:26px;color:#616161;letter-spacing:0.190px;-webkit-text-stroke:0.160px;">6</div>
<div class="b " style="left:1483px;top:535px;width:8px;height:8px;border-radius:50%;border:1.300px solid #212121;box-sizing:border-box;"></div>
<div class="t " style="left:1493.5px;top:526px;font-size:12px;line-height:26px;color:#616161;letter-spacing:0.190px;-webkit-text-stroke:0.160px;">3</div>
<div class="t " style="left:1483.5px;top:552px;font-size:12px;line-height:26px;color:#757575;letter-spacing:-0.680px;-webkit-text-stroke:0.160px;">-</div>
<div class="t " style="left:1483.5px;top:578px;font-size:12px;line-height:26px;color:#757575;letter-spacing:-0.680px;-webkit-text-stroke:0.160px;">-</div>
<div class="t " style="left:1483.5px;top:604px;font-size:12px;line-height:26px;color:#388e3c;letter-spacing:0.762px;font-weight:bold;">-</div>
<div class="t " style="left:1584.5px;top:448px;font-size:12px;line-height:26px;color:#757575;letter-spacing:0.345px;-webkit-text-stroke:0.160px;">J.falcon</div>
<div class="t " style="left:1584.5px;top:474px;font-size:12px;line-height:26px;color:#757575;letter-spacing:-0.560px;-webkit-text-stroke:0.160px;">-</div>
<div class="b " style="left:1584px;top:509px;width:8px;height:8px;border-radius:50%;border:1.300px solid #212121;box-sizing:border-box;"></div>
<div class="t " style="left:1594.5px;top:500px;font-size:12px;line-height:26px;color:#616161;letter-spacing:0.190px;-webkit-text-stroke:0.160px;">3</div>
<div class="b " style="left:1584px;top:535px;width:8px;height:8px;border-radius:50%;border:1.300px solid #212121;box-sizing:border-box;"></div>
<div class="t " style="left:1594.5px;top:526px;font-size:12px;line-height:26px;color:#616161;letter-spacing:0.190px;-webkit-text-stroke:0.160px;">6</div>
<div class="t " style="left:1584.5px;top:552px;font-size:12px;line-height:26px;color:#757575;letter-spacing:-0.680px;-webkit-text-stroke:0.160px;">-</div>
<div class="t " style="left:1584.5px;top:578px;font-size:12px;line-height:26px;color:#757575;letter-spacing:-0.680px;-webkit-text-stroke:0.160px;">-</div>
<div class="t " style="left:1584.5px;top:604px;font-size:12px;line-height:26px;color:#388e3c;letter-spacing:0.762px;font-weight:bold;">-</div>
<svg class="i" style="left:850px;top:642.8px;" width="18" height="18" viewBox="0 0 24 24"><path fill="#616161" d="M3.9 12c0-1.71 1.39-3.1 3.1-3.1h4V7H7c-2.76 0-5 2.24-5 5s2.24 5 5 5h4v-1.9H7c-1.71 0-3.1-1.39-3.1-3.1zM8 13h8v-2H8v2zm9-6h-4v1.9h4c1.71 0 3.1 1.39 3.1 3.1s-1.39 3.1-3.1 3.1h-4V17h4c2.76 0 5-2.24 5-5s-2.24-5-5-5z"/></svg>
<div class="b " style="left:873px;top:651px;width:164px;height:2px;background:repeating-linear-gradient(90deg,#4a4a4a 0 2px,transparent 2px 4px);"></div>
<svg class="i" style="left:1036.5px;top:646.8px;" width="10" height="10.4" viewBox="0 0 10 10.400"><path d="M0.300 0L9.600 5.200 0.300 10.400z" fill="#616161"/></svg>
<div class="b " style="left:1049px;top:640px;width:24px;height:24px;background:#e5e6e8;border-radius:4px;"></div>
<svg class="i" style="left:1051.75px;top:642.75px;" width="18.5" height="18.5" viewBox="0 0 24 24"><path fill="#f44336" d="M12 2C6.48 2 2 6.48 2 12s4.48 10 10 10 10-4.48 10-10S17.52 2 12 2zM4 12c0-4.42 3.58-8 8-8 1.85 0 3.55.63 4.9 1.69L5.69 16.9C4.63 15.55 4 13.85 4 12zm8 8c-1.85 0-3.55-.63-4.9-1.69L18.31 7.1C19.37 8.45 20 10.15 20 12c0 4.42-3.58 8-8 8z"/></svg>
<div class="b " style="left:1075px;top:651px;width:265px;height:2px;background:repeating-linear-gradient(90deg,#4a4a4a 0 2px,transparent 2px 4px);"></div>
<svg class="i" style="left:1339.7px;top:646.8px;" width="10" height="10.4" viewBox="0 0 10 10.400"><path d="M0.300 0L9.600 5.200 0.300 10.400z" fill="#616161"/></svg>
<svg class="i" style="left:1354.75px;top:642.75px;" width="18.5" height="18.5" viewBox="0 0 24 24"><path fill="#f44336" d="M12 2C6.48 2 2 6.48 2 12s4.48 10 10 10 10-4.48 10-10S17.52 2 12 2zM4 12c0-4.42 3.58-8 8-8 1.85 0 3.55.63 4.9 1.69L5.69 16.9C4.63 15.55 4 13.85 4 12zm8 8c-1.85 0-3.55-.63-4.9-1.69L18.31 7.1C19.37 8.45 20 10.15 20 12c0 4.42-3.58 8-8 8z"/></svg>
<div class="t " style="left:-35px;width:600px;text-align:right;top:882px;font-size:12px;line-height:26px;color:#212121;letter-spacing:0.155px;-webkit-text-stroke:0.160px;margin-left:0.155px;">Completion:</div>
<div class="b " style="left:569px;top:882px;width:1px;height:26px;background:#e0e0e0;"></div>
<div class="b " style="left:574px;top:886px;width:92px;height:18px;background:#4caf50;"></div>
<div class="b " style="left:670px;top:882px;width:1px;height:26px;background:#e0e0e0;"></div>
<div class="b " style="left:675px;top:886px;width:75px;height:18px;background:#4caf50;"></div>
<div class="b " style="left:750px;top:886px;width:17px;height:18px;background:#f44336;"></div>
<div class="b " style="left:771px;top:882px;width:1px;height:26px;background:#e0e0e0;"></div>
<div class="b " style="left:776px;top:886px;width:63px;height:18px;background:#4caf50;"></div>
<div class="b " style="left:839px;top:886px;width:17px;height:18px;background:#f44336;"></div>
<div class="b " style="left:856px;top:886px;width:12px;height:18px;background:#ffb74d;"></div>
<div class="b " style="left:872px;top:882px;width:1px;height:26px;background:#e0e0e0;"></div>
<div class="b " style="left:877px;top:886px;width:15px;height:18px;background:#4caf50;"></div>
<div class="b " style="left:892px;top:886px;width:37px;height:18px;background:#ffb74d;"></div>
<div class="b " style="left:929px;top:886px;width:40px;height:18px;background:#64b5f6;"></div>
<div class="b " style="left:973px;top:882px;width:1px;height:26px;background:#e0e0e0;"></div>
<div class="b " style="left:978px;top:886px;width:57px;height:18px;background:#64b5f6;"></div>
<div class="b " style="left:1035px;top:886px;width:35px;height:18px;background:#ebebeb;"></div>
<div class="b " style="left:1074px;top:882px;width:1px;height:26px;background:#e0e0e0;"></div>
<div class="b " style="left:1079px;top:886px;width:46px;height:18px;background:#64b5f6;"></div>
<div class="b " style="left:1125px;top:886px;width:46px;height:18px;background:#ebebeb;"></div>
<div class="b " style="left:1175px;top:882px;width:1px;height:26px;background:#e0e0e0;"></div>
<div class="b " style="left:1180px;top:886px;width:92px;height:18px;background:#ebebeb;"></div>
<div class="b " style="left:1276px;top:882px;width:1px;height:26px;background:#e0e0e0;"></div>
<div class="b " style="left:1281px;top:886px;width:92px;height:18px;background:#ebebeb;"></div>
<div class="b " style="left:1377px;top:882px;width:1px;height:26px;background:#e0e0e0;"></div>
<div class="b " style="left:1382px;top:886px;width:92px;height:18px;background:#ebebeb;"></div>
<div class="b " style="left:1478px;top:882px;width:1px;height:26px;background:#e0e0e0;"></div>
<div class="b " style="left:1483px;top:886px;width:92px;height:18px;background:#ebebeb;"></div>
<div class="b " style="left:1579px;top:882px;width:1px;height:26px;background:#e0e0e0;"></div>
<div class="b " style="left:1584px;top:886px;width:92px;height:18px;background:#ebebeb;"></div>
<div class="b " style="left:1680px;top:882px;width:1px;height:27px;background:#e0e0e0;"></div>
<div class="b " style="left:569px;top:908px;width:1112px;height:1px;background:#e0e0e0;"></div>
<div class="b " style="left:0px;top:930px;width:1920px;height:1px;background:#e0e0e0;"></div>
<div class="b " style="left:0px;top:930px;width:1px;height:104px;background:#d6d6d6;"></div>
<div class="b " style="left:569px;top:930px;width:1px;height:104px;background:#e0e0e0;"></div>
<div class="b " style="left:670px;top:930px;width:1px;height:104px;background:#e0e0e0;"></div>
<div class="b " style="left:771px;top:930px;width:1px;height:104px;background:#e0e0e0;"></div>
<div class="b " style="left:872px;top:930px;width:1px;height:104px;background:#e0e0e0;"></div>
<div class="b " style="left:973px;top:930px;width:1px;height:104px;background:#e0e0e0;"></div>
<div class="b " style="left:1074px;top:930px;width:1px;height:104px;background:#e0e0e0;"></div>
<div class="b " style="left:1175px;top:930px;width:1px;height:104px;background:#e0e0e0;"></div>
<div class="b " style="left:1276px;top:930px;width:1px;height:104px;background:#e0e0e0;"></div>
<div class="b " style="left:1377px;top:930px;width:1px;height:104px;background:#e0e0e0;"></div>
<div class="b " style="left:1478px;top:930px;width:1px;height:104px;background:#e0e0e0;"></div>
<div class="b " style="left:1579px;top:930px;width:1px;height:104px;background:#e0e0e0;"></div>
<div class="b " style="left:1680px;top:930px;width:1px;height:104px;background:#e0e0e0;"></div>
<div class="b " style="left:1781px;top:930px;width:1px;height:104px;background:#e0e0e0;"></div>
<div class="b " style="left:1882px;top:930px;width:1px;height:104px;background:#e0e0e0;"></div>
<div class="b " style="left:0px;top:1033px;width:1920px;height:1px;background:#e0e0e0;"></div>
<div class="b " style="left:1919px;top:930px;width:1px;height:104px;background:#e0e0e0;"></div>
<div class="t " style="left:574.5px;top:930px;font-size:12px;line-height:26px;color:#212121;letter-spacing:-0.404px;font-weight:bold;">GF.1</div>
<div class="t " style="left:574.5px;top:956px;font-size:12px;line-height:26px;color:#212121;letter-spacing:0.110px;-webkit-text-stroke:0.160px;">0.9</div>
<div class="b " style="left:576px;top:988px;width:14px;height:14px;background:#c58cff;"></div>
<div class="t " style="left:598.3px;top:982px;font-size:12px;line-height:26px;color:#212121;letter-spacing:-0.147px;-webkit-text-stroke:0.160px;">T-100</div>
<div class="t " style="left:574.5px;top:1008px;font-size:12px;line-height:26px;color:#212121;letter-spacing:0.170px;-webkit-text-stroke:0.160px;">20 Jun</div>
<div class="t " style="left:675.5px;top:930px;font-size:12px;line-height:26px;color:#212121;letter-spacing:-0.404px;font-weight:bold;">GF.2</div>
<div class="t " style="left:675.5px;top:956px;font-size:12px;line-height:26px;color:#212121;letter-spacing:0.110px;-webkit-text-stroke:0.160px;">1.2</div>
<div class="b " style="left:677px;top:988px;width:14px;height:14px;background:#c58cff;"></div>
<div class="t " style="left:699.3px;top:982px;font-size:12px;line-height:26px;color:#212121;letter-spacing:-0.147px;-webkit-text-stroke:0.160px;">T-100</div>
<div class="t " style="left:675.5px;top:1008px;font-size:12px;line-height:26px;color:#212121;letter-spacing:0.170px;-webkit-text-stroke:0.160px;">22 Jun</div>
<div class="t " style="left:776.5px;top:930px;font-size:12px;line-height:26px;color:#212121;letter-spacing:-0.404px;font-weight:bold;">GF.3</div>
<div class="t " style="left:776.5px;top:956px;font-size:12px;line-height:26px;color:#212121;letter-spacing:0.110px;-webkit-text-stroke:0.160px;">1.5</div>
<div class="b " style="left:778px;top:988px;width:14px;height:14px;background:#c58cff;"></div>
<div class="t " style="left:800.3px;top:982px;font-size:12px;line-height:26px;color:#212121;letter-spacing:-0.147px;-webkit-text-stroke:0.160px;">T-100</div>
<div class="t " style="left:776.5px;top:1008px;font-size:12px;line-height:26px;color:#212121;letter-spacing:0.170px;-webkit-text-stroke:0.160px;">23 Jun</div>
<div class="t " style="left:877.5px;top:930px;font-size:12px;line-height:26px;color:#212121;letter-spacing:-0.404px;font-weight:bold;">GF.4</div>
<div class="t " style="left:877.5px;top:956px;font-size:12px;line-height:26px;color:#212121;letter-spacing:0.110px;-webkit-text-stroke:0.160px;">0.8</div>
<div class="b " style="left:879px;top:988px;width:14px;height:14px;background:#c58cff;"></div>
<div class="t " style="left:901.3px;top:982px;font-size:12px;line-height:26px;color:#212121;letter-spacing:-0.147px;-webkit-text-stroke:0.160px;">T-100</div>
<div class="t " style="left:877.5px;top:1008px;font-size:12px;line-height:26px;color:#212121;letter-spacing:0.170px;-webkit-text-stroke:0.160px;">25 Jun</div>
<div class="t " style="left:978.5px;top:930px;font-size:12px;line-height:26px;color:#212121;letter-spacing:-0.404px;font-weight:bold;">GF.5</div>
<div class="t " style="left:978.5px;top:956px;font-size:12px;line-height:26px;color:#212121;letter-spacing:0.190px;-webkit-text-stroke:0.160px;">08</div>
<div class="b " style="left:980px;top:988px;width:14px;height:14px;background:#c58cff;"></div>
<div class="t " style="left:1002.3px;top:982px;font-size:12px;line-height:26px;color:#212121;letter-spacing:-0.147px;-webkit-text-stroke:0.160px;">T-100</div>
<div class="t " style="left:978.5px;top:1008px;font-size:12px;line-height:26px;color:#212121;letter-spacing:0.170px;-webkit-text-stroke:0.160px;">25 Jun</div>
<div class="t " style="left:1079.5px;top:930px;font-size:12px;line-height:26px;color:#212121;letter-spacing:-0.079px;font-weight:bold;">A.A.1</div>
<div class="t " style="left:1079.5px;top:956px;font-size:12px;line-height:26px;color:#212121;letter-spacing:0.110px;-webkit-text-stroke:0.160px;">1.5</div>
<div class="b " style="left:1081px;top:988px;width:14px;height:14px;background:#c58cff;"></div>
<div class="t " style="left:1103.3px;top:982px;font-size:12px;line-height:26px;color:#212121;letter-spacing:-0.147px;-webkit-text-stroke:0.160px;">T-100</div>
<div class="t " style="left:1079.5px;top:1008px;font-size:12px;line-height:26px;color:#212121;letter-spacing:0.170px;-webkit-text-stroke:0.160px;">28 Jun</div>
<div class="t " style="left:1180.5px;top:930px;font-size:12px;line-height:26px;color:#212121;letter-spacing:-0.079px;font-weight:bold;">A.A.2</div>
<div class="t " style="left:1180.5px;top:956px;font-size:12px;line-height:26px;color:#212121;letter-spacing:0.110px;-webkit-text-stroke:0.160px;">2.0</div>
<div class="b " style="left:1182px;top:988px;width:14px;height:14px;background:#c58cff;"></div>
<div class="t " style="left:1204.3px;top:982px;font-size:12px;line-height:26px;color:#212121;letter-spacing:-0.147px;-webkit-text-stroke:0.160px;">T-100</div>
<div class="t " style="left:1180.5px;top:1008px;font-size:12px;line-height:26px;color:#212121;letter-spacing:0.170px;-webkit-text-stroke:0.160px;">30 Jun</div>
<div class="t " style="left:1281.5px;top:930px;font-size:12px;line-height:26px;color:#212121;letter-spacing:-0.079px;font-weight:bold;">A.A.3</div>
<div class="t " style="left:1281.5px;top:956px;font-size:12px;line-height:26px;color:#212121;letter-spacing:0.110px;-webkit-text-stroke:0.160px;">0.5</div>
<div class="b " style="left:1283px;top:988px;width:14px;height:14px;background:#c58cff;"></div>
<div class="t " style="left:1305.3px;top:982px;font-size:12px;line-height:26px;color:#212121;letter-spacing:-0.147px;-webkit-text-stroke:0.160px;">T-100</div>
<div class="t " style="left:1281.5px;top:1008px;font-size:12px;line-height:26px;color:#212121;letter-spacing:0.170px;-webkit-text-stroke:0.160px;">30 Jun</div>
<div class="t " style="left:1382.5px;top:930px;font-size:12px;line-height:26px;color:#212121;letter-spacing:-0.079px;font-weight:bold;">A.A.4</div>
<div class="t " style="left:1382.5px;top:956px;font-size:12px;line-height:26px;color:#212121;letter-spacing:0.110px;-webkit-text-stroke:0.160px;">1.1</div>
<div class="b " style="left:1384px;top:988px;width:14px;height:14px;background:#c58cff;"></div>
<div class="t " style="left:1406.3px;top:982px;font-size:12px;line-height:26px;color:#212121;letter-spacing:-0.147px;-webkit-text-stroke:0.160px;">T-100</div>
<div class="t " style="left:1382.5px;top:1008px;font-size:12px;line-height:26px;color:#212121;letter-spacing:0.226px;-webkit-text-stroke:0.160px;">1 Jul</div>
<div class="t " style="left:1483.5px;top:930px;font-size:12px;line-height:26px;color:#212121;letter-spacing:-0.079px;font-weight:bold;">A.A.5</div>
<div class="t " style="left:1483.5px;top:956px;font-size:12px;line-height:26px;color:#212121;letter-spacing:0.110px;-webkit-text-stroke:0.160px;">0.5</div>
<div class="b " style="left:1485px;top:988px;width:14px;height:14px;background:#c58cff;"></div>
<div class="t " style="left:1507.3px;top:982px;font-size:12px;line-height:26px;color:#212121;letter-spacing:-0.147px;-webkit-text-stroke:0.160px;">T-100</div>
<div class="t " style="left:1483.5px;top:1008px;font-size:12px;line-height:26px;color:#212121;letter-spacing:0.226px;-webkit-text-stroke:0.160px;">2 Jul</div>
<div class="t " style="left:1584.5px;top:930px;font-size:12px;line-height:26px;color:#212121;letter-spacing:-0.079px;font-weight:bold;">A.A.6</div>
<div class="t " style="left:1584.5px;top:956px;font-size:12px;line-height:26px;color:#212121;letter-spacing:0.110px;-webkit-text-stroke:0.160px;">0.8</div>
<div class="b " style="left:1586px;top:988px;width:14px;height:14px;background:#c58cff;"></div>
<div class="t " style="left:1608.3px;top:982px;font-size:12px;line-height:26px;color:#212121;letter-spacing:-0.147px;-webkit-text-stroke:0.160px;">T-100</div>
<div class="t " style="left:1584.5px;top:1008px;font-size:12px;line-height:26px;color:#212121;letter-spacing:0.226px;-webkit-text-stroke:0.160px;">2 Jul</div>
<div class="t " style="left:1685.5px;top:930px;font-size:12px;line-height:26px;color:#212121;letter-spacing:-0.079px;font-weight:bold;">A.A.7</div>
<div class="t " style="left:1685.5px;top:956px;font-size:12px;line-height:26px;color:#212121;letter-spacing:0.110px;-webkit-text-stroke:0.160px;">1.1</div>
<div class="b " style="left:1687px;top:988px;width:14px;height:14px;background:#c58cff;"></div>
<div class="t " style="left:1709.3px;top:982px;font-size:12px;line-height:26px;color:#212121;letter-spacing:-0.147px;-webkit-text-stroke:0.160px;">T-100</div>
<div class="t " style="left:1685.5px;top:1008px;font-size:12px;line-height:26px;color:#212121;letter-spacing:0.226px;-webkit-text-stroke:0.160px;">6 Jul</div>
<div class="t " style="left:1786.5px;top:930px;font-size:12px;line-height:26px;color:#212121;letter-spacing:-0.079px;font-weight:bold;">A.A.8</div>
<div class="t " style="left:1786.5px;top:956px;font-size:12px;line-height:26px;color:#212121;letter-spacing:0.110px;-webkit-text-stroke:0.160px;">1.4</div>
<div class="b " style="left:1788px;top:988px;width:14px;height:14px;background:#c58cff;"></div>
<div class="t " style="left:1810.3px;top:982px;font-size:12px;line-height:26px;color:#212121;letter-spacing:-0.147px;-webkit-text-stroke:0.160px;">T-100</div>
<div class="t " style="left:1786.5px;top:1008px;font-size:12px;line-height:26px;color:#212121;letter-spacing:0.226px;-webkit-text-stroke:0.160px;">8 Jul</div>
<svg class="i" style="left:1890.55px;top:971.45px;" width="20.5" height="20.5" viewBox="0 0 24 24"><path fill="#616161" d="M19 13h-6v6h-2v-6H5v-2h6V5h2v6h6v2z"/></svg>
<svg class="i" style="left:16px;top:942.2px;" width="18" height="18" viewBox="0 0 24 24"><path fill="#616161" d="M10 6L8.59 7.41 13.17 12l-4.58 4.59L10 18l6-6z"/></svg>
<svg class="i" style="left:38.4px;top:938px;" width="24" height="24" viewBox="0 0 24 24"><path fill="#f6a93b" d="M12 3L1 9l4 2.18v6L12 21l7-3.82v-6l2-1.09V17h2V9L12 3zm6.82 6L12 12.72 5.18 9 12 5.28 18.82 9zM17 15.99l-5 2.73-5-2.73v-3.72L12 15l5-2.73v3.72z"/></svg>
<div class="t " style="left:70.2px;top:937.4px;font-size:14px;line-height:26px;color:#212121;letter-spacing:-0.111px;-webkit-text-stroke:0.160px;">Fighter REF cse32</div>
<svg class="i" style="left:197.428px;top:941px;" width="18" height="18" viewBox="0 0 24 24"><path fill="#616161" d="M6 10c-1.1 0-2 .9-2 2s.9 2 2 2 2-.9 2-2-.9-2-2-2zm12 0c-1.1 0-2 .9-2 2s.9 2 2 2 2-.9 2-2-.9-2-2-2zm-6 0c-1.1 0-2 .9-2 2s.9 2 2 2 2-.9 2-2-.9-2-2-2z"/></svg>
<svg class="i" style="left:221.128px;top:941px;" width="18" height="18" viewBox="0 0 24 24"><path fill="#616161" d="M19 13h-6v6h-2v-6H5v-2h6V5h2v6h6v2z"/></svg>
<div class="t " style="left:70.6px;top:961.4px;font-size:12px;line-height:26px;color:#757575;letter-spacing:0.015px;-webkit-text-stroke:0.160px;">Planned: 20 Jun - 8 Jul, 2026</div>
<div class="t " style="left:-35px;width:600px;text-align:right;top:1034px;font-size:12px;line-height:26px;color:#212121;letter-spacing:0.155px;-webkit-text-stroke:0.160px;margin-left:0.155px;">Completion:</div>
<div class="b " style="left:569px;top:1034px;width:1px;height:26px;background:#e0e0e0;"></div>
<div class="b " style="left:574px;top:1038px;width:92px;height:18px;background:#4caf50;"></div>
<div class="b " style="left:670px;top:1034px;width:1px;height:26px;background:#e0e0e0;"></div>
<div class="b " style="left:675px;top:1038px;width:75px;height:18px;background:#4caf50;"></div>
<div class="b " style="left:750px;top:1038px;width:17px;height:18px;background:#f44336;"></div>
<div class="b " style="left:771px;top:1034px;width:1px;height:26px;background:#e0e0e0;"></div>
<div class="b " style="left:776px;top:1038px;width:63px;height:18px;background:#4caf50;"></div>
<div class="b " style="left:839px;top:1038px;width:17px;height:18px;background:#f44336;"></div>
<div class="b " style="left:856px;top:1038px;width:12px;height:18px;background:#ffb74d;"></div>
<div class="b " style="left:872px;top:1034px;width:1px;height:26px;background:#e0e0e0;"></div>
<div class="b " style="left:877px;top:1038px;width:70px;height:18px;background:#4caf50;"></div>
<div class="b " style="left:947px;top:1038px;width:14px;height:18px;background:#ffb74d;"></div>
<div class="b " style="left:961px;top:1038px;width:8px;height:18px;background:#64b5f6;"></div>
<div class="b " style="left:973px;top:1034px;width:1px;height:26px;background:#e0e0e0;"></div>
<div class="b " style="left:978px;top:1038px;width:37px;height:18px;background:#4caf50;"></div>
<div class="b " style="left:1015px;top:1038px;width:55px;height:18px;background:#64b5f6;"></div>
<div class="b " style="left:1074px;top:1034px;width:1px;height:26px;background:#e0e0e0;"></div>
<div class="b " style="left:1079px;top:1038px;width:92px;height:18px;background:#64b5f6;"></div>
<div class="b " style="left:1175px;top:1034px;width:1px;height:26px;background:#e0e0e0;"></div>
<div class="b " style="left:1180px;top:1038px;width:92px;height:18px;background:#64b5f6;"></div>
<div class="b " style="left:1276px;top:1034px;width:1px;height:26px;background:#e0e0e0;"></div>
<div class="b " style="left:1281px;top:1038px;width:92px;height:18px;background:#64b5f6;"></div>
<div class="b " style="left:1377px;top:1034px;width:1px;height:26px;background:#e0e0e0;"></div>
<div class="b " style="left:1382px;top:1038px;width:92px;height:18px;background:#64b5f6;"></div>
<div class="b " style="left:1478px;top:1034px;width:1px;height:26px;background:#e0e0e0;"></div>
<div class="b " style="left:1483px;top:1038px;width:92px;height:18px;background:#ebebeb;"></div>
<div class="b " style="left:1579px;top:1034px;width:1px;height:26px;background:#e0e0e0;"></div>
<div class="b " style="left:1584px;top:1038px;width:92px;height:18px;background:#ebebeb;"></div>
<div class="b " style="left:1680px;top:1034px;width:1px;height:26px;background:#e0e0e0;"></div>
<div class="b " style="left:1685px;top:1038px;width:92px;height:18px;background:#ebebeb;"></div>
<div class="b " style="left:1781px;top:1034px;width:1px;height:26px;background:#e0e0e0;"></div>
<div class="b " style="left:1786px;top:1038px;width:92px;height:18px;background:#ebebeb;"></div>
<div class="b " style="left:1882px;top:1034px;width:1px;height:27px;background:#e0e0e0;"></div>
<div class="b " style="left:569px;top:1060px;width:1314px;height:1px;background:#e0e0e0;"></div>
<div class="b" style="left:1038px;top:666px;width:442px;height:214px;background:#fff;border-radius:4px;box-shadow:0 1px 1.500px rgba(0,0,0,.45),0 1px 6px rgba(0,0,0,.24),0 0 3px rgba(0,0,0,.12);"></div>
<div class="b " style="left:1259px;top:666px;width:1px;height:214px;background:#e0e0e0;"></div>
<svg class="i" style="left:1052.2px;top:681px;" width="18" height="18" viewBox="0 0 24 24"><path fill="#f44336" d="M12 2C6.48 2 2 6.48 2 12s4.48 10 10 10 10-4.48 10-10S17.52 2 12 2zM4 12c0-4.42 3.58-8 8-8 1.85 0 3.55.63 4.9 1.69L5.69 16.9C4.63 15.55 4 13.85 4 12zm8 8c-1.85 0-3.55-.63-4.9-1.69L18.31 7.1C19.37 8.45 20 10.15 20 12c0 4.42-3.58 8-8 8z"/></svg>
<div class="t " style="left:1075.5px;top:677px;font-size:12px;line-height:26px;color:#333;letter-spacing:0.263px;-webkit-text-stroke:0.160px;">BLOCKED BY CH3</div>
<div class="t " style="left:1055px;top:721px;font-size:12px;line-height:26px;color:#757575;letter-spacing:0.148px;-webkit-text-stroke:0.160px;">Lesson</div>
<div class="t " style="left:1055px;top:744.2px;font-size:12px;line-height:26px;color:#757575;letter-spacing:0.248px;-webkit-text-stroke:0.160px;">Asset</div>
<div class="t " style="left:1055px;top:768px;font-size:12px;line-height:26px;color:#757575;letter-spacing:0.126px;-webkit-text-stroke:0.160px;">Duration</div>
<div class="t " style="left:1055px;top:791.7px;font-size:12px;line-height:26px;color:#757575;letter-spacing:0.059px;-webkit-text-stroke:0.160px;">Planned</div>
<div class="t " style="left:1276.2px;top:721px;font-size:12px;line-height:26px;color:#757575;letter-spacing:0.148px;-webkit-text-stroke:0.160px;">Lesson</div>
<div class="t " style="left:1276.2px;top:744.2px;font-size:12px;line-height:26px;color:#757575;letter-spacing:0.248px;-webkit-text-stroke:0.160px;">Asset</div>
<div class="t " style="left:1276.2px;top:768px;font-size:12px;line-height:26px;color:#757575;letter-spacing:0.126px;-webkit-text-stroke:0.160px;">Duration</div>
<div class="t " style="left:1276.2px;top:791.7px;font-size:12px;line-height:26px;color:#757575;letter-spacing:0.059px;-webkit-text-stroke:0.160px;">Planned</div>
<div class="t " style="left:1119.2px;top:721px;font-size:12px;line-height:26px;color:#555;letter-spacing:-0.210px;font-weight:bold;">CH3</div>
<div class="b " style="left:1119.2px;top:750.6px;width:11.6px;height:11.6px;background:#c9a3f3;"></div>
<div class="t " style="left:1135.5px;top:744.2px;font-size:12px;line-height:26px;color:#555;letter-spacing:-0.147px;-webkit-text-stroke:0.160px;">T-100</div>
<div class="t " style="left:1121.2px;top:768px;font-size:12px;line-height:26px;color:#212121;letter-spacing:0.110px;-webkit-text-stroke:0.160px;">1.5</div>
<div class="t " style="left:1121.2px;top:791.7px;font-size:12px;line-height:26px;color:#212121;letter-spacing:0.147px;-webkit-text-stroke:0.160px;">13 Jul 2026</div>
<div class="t " style="left:1055px;top:831.7px;font-size:12px;line-height:26px;color:#c0392b;letter-spacing:0.183px;-webkit-text-stroke:0.160px;">CH3 must be completed before</div>
<div class="t " style="left:1055px;top:847.4px;font-size:12px;line-height:26px;color:#c0392b;letter-spacing:0.169px;-webkit-text-stroke:0.160px;">this lesson can proceed.</div>
<svg class="i" style="left:1273px;top:681px;" width="18" height="18" viewBox="0 0 24 24"><path fill="#757575" d="M3.9 12c0-1.71 1.39-3.1 3.1-3.1h4V7H7c-2.76 0-5 2.24-5 5s2.24 5 5 5h4v-1.9H7c-1.71 0-3.1-1.39-3.1-3.1zM8 13h8v-2H8v2zm9-6h-4v1.9h4c1.71 0 3.1 1.39 3.1 3.1s-1.39 3.1-3.1 3.1h-4V17h4c2.76 0 5-2.24 5-5s-2.24-5-5-5z"/></svg>
<div class="t " style="left:1296.2px;top:677px;font-size:12px;line-height:26px;color:#333;letter-spacing:0.122px;-webkit-text-stroke:0.160px;">REQUIRED FOR CH9</div>
<div class="t " style="left:1340.5px;top:721px;font-size:12px;line-height:26px;color:#212121;letter-spacing:-0.210px;font-weight:bold;">CH9</div>
<div class="b " style="left:1340.5px;top:750.6px;width:11.6px;height:11.6px;background:#c9a3f3;"></div>
<div class="t " style="left:1356.7px;top:744.2px;font-size:12px;line-height:26px;color:#555;letter-spacing:-0.147px;-webkit-text-stroke:0.160px;">T-100</div>
<div class="t " style="left:1342.5px;top:768px;font-size:12px;line-height:26px;color:#212121;letter-spacing:0.110px;-webkit-text-stroke:0.160px;">1.1</div>
<div class="t " style="left:1342px;top:791.7px;font-size:12px;line-height:26px;color:#212121;letter-spacing:-0.680px;-webkit-text-stroke:0.160px;">-</div>
</div>
</body></html>
